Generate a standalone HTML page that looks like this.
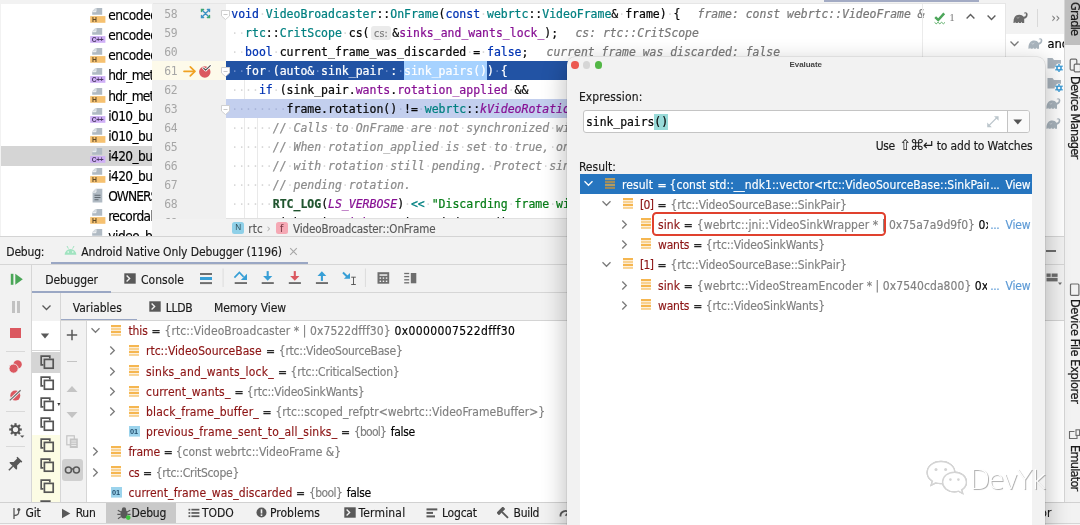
<!DOCTYPE html>
<html lang="en"><head><meta charset="utf-8"><title>Evaluate</title><style>
html,body{margin:0;padding:0;}
body{width:1080px;height:525px;overflow:hidden;position:relative;background:#f2f2f2;font-family:'DejaVu Sans Condensed','Liberation Sans',sans-serif;}
#root{position:absolute;left:0;top:0;width:1080px;height:525px;overflow:hidden;will-change:transform;}
#root div,#root span.t,#root svg,#root span.c{position:absolute;}
span.t,span.c{white-space:pre;display:block;}
.clip{overflow:hidden;}
span.m{-webkit-text-stroke:0.22px currentColor;}
span.u{-webkit-text-stroke:0.15px currentColor;}
</style></head><body><div id="root">
<div style="left:0px;top:0px;width:1080px;height:525px;background:#f2f2f2;"></div>
<div style="left:1px;top:3.5px;width:151px;height:232.3px;background:#ffffff;"></div>
<div style="left:1px;top:146px;width:151px;height:20px;background:#d5d5d5;"></div>
<div class="clip" style="left:0;top:3.5px;width:152px;height:232.3px">
<svg style="left:89.5px;top:4.5px" width="16" height="16" viewBox="0 0 16 16"><path d="M5.6 0 H12.2 V6.7 H2.2 V3.4 Z" fill="#b0bac3"/><path d="M5.9 0.2 V3.7 H2.4" fill="none" stroke="#ffffff" stroke-width="0.9"/><path d="M5.2 0.3 V3.1 H2.4 Z" fill="#d5dadf"/><rect x="0.2" y="8.1" width="15.2" height="6.7" fill="#f6c170"/><text x="1.9" y="14.1" font-size="6.8" font-weight="bold" font-family="Liberation Sans,sans-serif" fill="#5e4a2a">H</text></svg>
<span class="t u" style="left:108.2px;top:2.80px;height:18px;line-height:18px;font-size:13.6px;color:#000;font-family:'DejaVu Sans Condensed','Liberation Sans',sans-serif;letter-spacing:-0.45px;">encoded_frame.h</span>
<svg style="left:89.5px;top:24.549999999999997px" width="16" height="16" viewBox="0 0 16 16"><path d="M5.6 0 H12.2 V6.7 H2.2 V3.4 Z" fill="#b0bac3"/><path d="M5.9 0.2 V3.7 H2.4" fill="none" stroke="#ffffff" stroke-width="0.9"/><path d="M5.2 0.3 V3.1 H2.4 Z" fill="#d5dadf"/><rect x="0.2" y="8.1" width="15.2" height="6.7" fill="#cfaff6"/><text x="1.7" y="13.9" font-size="6.6" font-weight="bold" font-family="Liberation Sans,sans-serif" fill="#4a3a62" letter-spacing="-0.25">C++</text></svg>
<span class="t u" style="left:108.2px;top:22.85px;height:18px;line-height:18px;font-size:13.6px;color:#000;font-family:'DejaVu Sans Condensed','Liberation Sans',sans-serif;letter-spacing:-0.45px;">encoded_image.cc</span>
<svg style="left:89.5px;top:44.6px" width="16" height="16" viewBox="0 0 16 16"><path d="M5.6 0 H12.2 V6.7 H2.2 V3.4 Z" fill="#b0bac3"/><path d="M5.9 0.2 V3.7 H2.4" fill="none" stroke="#ffffff" stroke-width="0.9"/><path d="M5.2 0.3 V3.1 H2.4 Z" fill="#d5dadf"/><rect x="0.2" y="8.1" width="15.2" height="6.7" fill="#f6c170"/><text x="1.9" y="14.1" font-size="6.8" font-weight="bold" font-family="Liberation Sans,sans-serif" fill="#5e4a2a">H</text></svg>
<span class="t u" style="left:108.2px;top:42.90px;height:18px;line-height:18px;font-size:13.6px;color:#000;font-family:'DejaVu Sans Condensed','Liberation Sans',sans-serif;letter-spacing:-0.45px;">encoded_image.h</span>
<svg style="left:89.5px;top:64.65px" width="16" height="16" viewBox="0 0 16 16"><path d="M5.6 0 H12.2 V6.7 H2.2 V3.4 Z" fill="#b0bac3"/><path d="M5.9 0.2 V3.7 H2.4" fill="none" stroke="#ffffff" stroke-width="0.9"/><path d="M5.2 0.3 V3.1 H2.4 Z" fill="#d5dadf"/><rect x="0.2" y="8.1" width="15.2" height="6.7" fill="#cfaff6"/><text x="1.7" y="13.9" font-size="6.6" font-weight="bold" font-family="Liberation Sans,sans-serif" fill="#4a3a62" letter-spacing="-0.25">C++</text></svg>
<span class="t u" style="left:108.2px;top:62.95px;height:18px;line-height:18px;font-size:13.6px;color:#000;font-family:'DejaVu Sans Condensed','Liberation Sans',sans-serif;letter-spacing:-0.8px;">hdr_metadata.cc</span>
<svg style="left:89.5px;top:84.7px" width="16" height="16" viewBox="0 0 16 16"><path d="M5.6 0 H12.2 V6.7 H2.2 V3.4 Z" fill="#b0bac3"/><path d="M5.9 0.2 V3.7 H2.4" fill="none" stroke="#ffffff" stroke-width="0.9"/><path d="M5.2 0.3 V3.1 H2.4 Z" fill="#d5dadf"/><rect x="0.2" y="8.1" width="15.2" height="6.7" fill="#f6c170"/><text x="1.9" y="14.1" font-size="6.8" font-weight="bold" font-family="Liberation Sans,sans-serif" fill="#5e4a2a">H</text></svg>
<span class="t u" style="left:108.2px;top:83.00px;height:18px;line-height:18px;font-size:13.6px;color:#000;font-family:'DejaVu Sans Condensed','Liberation Sans',sans-serif;letter-spacing:-0.8px;">hdr_metadata.h</span>
<svg style="left:89.5px;top:104.75px" width="16" height="16" viewBox="0 0 16 16"><path d="M5.6 0 H12.2 V6.7 H2.2 V3.4 Z" fill="#b0bac3"/><path d="M5.9 0.2 V3.7 H2.4" fill="none" stroke="#ffffff" stroke-width="0.9"/><path d="M5.2 0.3 V3.1 H2.4 Z" fill="#d5dadf"/><rect x="0.2" y="8.1" width="15.2" height="6.7" fill="#cfaff6"/><text x="1.7" y="13.9" font-size="6.6" font-weight="bold" font-family="Liberation Sans,sans-serif" fill="#4a3a62" letter-spacing="-0.25">C++</text></svg>
<span class="t u" style="left:108.2px;top:103.05px;height:18px;line-height:18px;font-size:13.6px;color:#000;font-family:'DejaVu Sans Condensed','Liberation Sans',sans-serif;letter-spacing:-0.6px;">i010_buffer.cc</span>
<svg style="left:89.5px;top:124.80000000000001px" width="16" height="16" viewBox="0 0 16 16"><path d="M5.6 0 H12.2 V6.7 H2.2 V3.4 Z" fill="#b0bac3"/><path d="M5.9 0.2 V3.7 H2.4" fill="none" stroke="#ffffff" stroke-width="0.9"/><path d="M5.2 0.3 V3.1 H2.4 Z" fill="#d5dadf"/><rect x="0.2" y="8.1" width="15.2" height="6.7" fill="#f6c170"/><text x="1.9" y="14.1" font-size="6.8" font-weight="bold" font-family="Liberation Sans,sans-serif" fill="#5e4a2a">H</text></svg>
<span class="t u" style="left:108.2px;top:123.10px;height:18px;line-height:18px;font-size:13.6px;color:#000;font-family:'DejaVu Sans Condensed','Liberation Sans',sans-serif;letter-spacing:-0.6px;">i010_buffer.h</span>
<svg style="left:89.5px;top:144.85px" width="16" height="16" viewBox="0 0 16 16"><path d="M5.6 0 H12.2 V6.7 H2.2 V3.4 Z" fill="#b0bac3"/><path d="M5.9 0.2 V3.7 H2.4" fill="none" stroke="#ffffff" stroke-width="0.9"/><path d="M5.2 0.3 V3.1 H2.4 Z" fill="#d5dadf"/><rect x="0.2" y="8.1" width="15.2" height="6.7" fill="#cfaff6"/><text x="1.7" y="13.9" font-size="6.6" font-weight="bold" font-family="Liberation Sans,sans-serif" fill="#4a3a62" letter-spacing="-0.25">C++</text></svg>
<span class="t u" style="left:108.2px;top:143.15px;height:18px;line-height:18px;font-size:13.6px;color:#000;font-family:'DejaVu Sans Condensed','Liberation Sans',sans-serif;letter-spacing:-0.6px;">i420_buffer.cc</span>
<svg style="left:89.5px;top:164.9px" width="16" height="16" viewBox="0 0 16 16"><path d="M5.6 0 H12.2 V6.7 H2.2 V3.4 Z" fill="#b0bac3"/><path d="M5.9 0.2 V3.7 H2.4" fill="none" stroke="#ffffff" stroke-width="0.9"/><path d="M5.2 0.3 V3.1 H2.4 Z" fill="#d5dadf"/><rect x="0.2" y="8.1" width="15.2" height="6.7" fill="#f6c170"/><text x="1.9" y="14.1" font-size="6.8" font-weight="bold" font-family="Liberation Sans,sans-serif" fill="#5e4a2a">H</text></svg>
<span class="t u" style="left:108.2px;top:163.20px;height:18px;line-height:18px;font-size:13.6px;color:#000;font-family:'DejaVu Sans Condensed','Liberation Sans',sans-serif;letter-spacing:-0.6px;">i420_buffer.h</span>
<svg style="left:89.5px;top:184.95000000000002px" width="16" height="16" viewBox="0 0 16 16"><path d="M5.7 0.8 H12.3 V14.6 H2.6 V3.9 Z" fill="#b0bac3"/><path d="M5.9 1 V4.1 H2.8" fill="none" stroke="#ffffff" stroke-width="0.9"/><path d="M5.3 1.1 V3.6 H2.8 Z" fill="#d5dadf"/><path d="M4.5 7.3 H10.5 M4.5 9.5 H10.5 M4.5 11.7 H8.5" stroke="#5f6870" stroke-width="1.1"/></svg>
<span class="t u" style="left:108.2px;top:183.25px;height:18px;line-height:18px;font-size:13.6px;color:#000;font-family:'DejaVu Sans Condensed','Liberation Sans',sans-serif;letter-spacing:-0.95px;">OWNERS</span>
<svg style="left:89.5px;top:205.0px" width="16" height="16" viewBox="0 0 16 16"><path d="M5.6 0 H12.2 V6.7 H2.2 V3.4 Z" fill="#b0bac3"/><path d="M5.9 0.2 V3.7 H2.4" fill="none" stroke="#ffffff" stroke-width="0.9"/><path d="M5.2 0.3 V3.1 H2.4 Z" fill="#d5dadf"/><rect x="0.2" y="8.1" width="15.2" height="6.7" fill="#f6c170"/><text x="1.9" y="14.1" font-size="6.8" font-weight="bold" font-family="Liberation Sans,sans-serif" fill="#5e4a2a">H</text></svg>
<span class="t u" style="left:108.2px;top:203.30px;height:18px;line-height:18px;font-size:13.6px;color:#000;font-family:'DejaVu Sans Condensed','Liberation Sans',sans-serif;letter-spacing:-0.6px;">recordable_encoded_frame.h</span>
<svg style="left:89.5px;top:225.05px" width="16" height="16" viewBox="0 0 16 16"><path d="M5.6 0 H12.2 V6.7 H2.2 V3.4 Z" fill="#b0bac3"/><path d="M5.9 0.2 V3.7 H2.4" fill="none" stroke="#ffffff" stroke-width="0.9"/><path d="M5.2 0.3 V3.1 H2.4 Z" fill="#d5dadf"/><rect x="0.2" y="8.1" width="15.2" height="6.7" fill="#cfaff6"/><text x="1.7" y="13.9" font-size="6.6" font-weight="bold" font-family="Liberation Sans,sans-serif" fill="#4a3a62" letter-spacing="-0.25">C++</text></svg>
<span class="t u" style="left:108.2px;top:223.35px;height:18px;line-height:18px;font-size:13.6px;color:#000;font-family:'DejaVu Sans Condensed','Liberation Sans',sans-serif;letter-spacing:-0.45px;">video_bitrate_allocation.cc</span>
</div>
<div style="left:152px;top:3px;width:73.5px;height:216.5px;background:#f0f0f0;"></div>
<div style="left:152.5px;top:2.5px;width:852px;height:1px;background:#e6e6e6;"></div>
<div style="left:225.5px;top:3.5px;width:779px;height:216px;background:#ffffff;"></div>
<div style="left:243.5px;top:80.0px;width:0.8px;height:152.0px;background:#e9e9e9;"></div>
<div style="left:257.3px;top:99.0px;width:0.8px;height:133.0px;background:#e9e9e9;"></div>
<div style="left:152px;top:61.0px;width:73.5px;height:19.0px;background:#fdfaea;"></div>
<div style="left:225.5px;top:61.0px;width:779px;height:19.0px;background:#2253a4;"></div>
<div style="left:225.5px;top:99.0px;width:779px;height:19.0px;background:#c3cfee;"></div>
<div style="left:404.05px;top:61.0px;width:82.92px;height:19.0px;background:#a6d2ff;"></div>
<span class="t n" style="left:164.2px;top:4.90px;height:19.0px;line-height:19.0px;font-size:11.4px;color:#a6a6a6;font-family:'DejaVu Sans Mono','Liberation Mono',monospace;letter-spacing:-0.359px;">58</span>
<span class="t n" style="left:164.2px;top:23.90px;height:19.0px;line-height:19.0px;font-size:11.4px;color:#a6a6a6;font-family:'DejaVu Sans Mono','Liberation Mono',monospace;letter-spacing:-0.359px;">59</span>
<span class="t n" style="left:164.2px;top:42.90px;height:19.0px;line-height:19.0px;font-size:11.4px;color:#a6a6a6;font-family:'DejaVu Sans Mono','Liberation Mono',monospace;letter-spacing:-0.359px;">60</span>
<span class="t n" style="left:164.2px;top:61.90px;height:19.0px;line-height:19.0px;font-size:11.4px;color:#a6a6a6;font-family:'DejaVu Sans Mono','Liberation Mono',monospace;letter-spacing:-0.359px;">61</span>
<span class="t n" style="left:164.2px;top:80.90px;height:19.0px;line-height:19.0px;font-size:11.4px;color:#a6a6a6;font-family:'DejaVu Sans Mono','Liberation Mono',monospace;letter-spacing:-0.359px;">62</span>
<span class="t n" style="left:164.2px;top:99.90px;height:19.0px;line-height:19.0px;font-size:11.4px;color:#a6a6a6;font-family:'DejaVu Sans Mono','Liberation Mono',monospace;letter-spacing:-0.359px;">63</span>
<span class="t n" style="left:164.2px;top:118.90px;height:19.0px;line-height:19.0px;font-size:11.4px;color:#a6a6a6;font-family:'DejaVu Sans Mono','Liberation Mono',monospace;letter-spacing:-0.359px;">64</span>
<span class="t n" style="left:164.2px;top:137.90px;height:19.0px;line-height:19.0px;font-size:11.4px;color:#a6a6a6;font-family:'DejaVu Sans Mono','Liberation Mono',monospace;letter-spacing:-0.359px;">65</span>
<span class="t n" style="left:164.2px;top:156.90px;height:19.0px;line-height:19.0px;font-size:11.4px;color:#a6a6a6;font-family:'DejaVu Sans Mono','Liberation Mono',monospace;letter-spacing:-0.359px;">66</span>
<span class="t n" style="left:164.2px;top:175.90px;height:19.0px;line-height:19.0px;font-size:11.4px;color:#a6a6a6;font-family:'DejaVu Sans Mono','Liberation Mono',monospace;letter-spacing:-0.359px;">67</span>
<span class="t n" style="left:164.2px;top:194.90px;height:19.0px;line-height:19.0px;font-size:11.4px;color:#a6a6a6;font-family:'DejaVu Sans Mono','Liberation Mono',monospace;letter-spacing:-0.359px;">68</span>
<span class="t n" style="left:164.2px;top:213.90px;height:19.0px;line-height:19.0px;font-size:11.4px;color:#a6a6a6;font-family:'DejaVu Sans Mono','Liberation Mono',monospace;letter-spacing:-0.359px;">69</span>
<span class="t d" style="left:231.3px;top:4.90px;height:19.0px;line-height:19.0px;font-size:11.5px;color:#d9d9d9;font-family:'DejaVu Sans Mono','Liberation Mono',monospace;letter-spacing:-0.014px;">    ·                               ·                   ·      ·</span>
<span class="t m" style="left:231.3px;top:4.90px;height:19.0px;line-height:19.0px;font-size:11.5px;color:#0033b3;font-family:'DejaVu Sans Mono','Liberation Mono',monospace;letter-spacing:-0.016px;">void</span>
<span class="t m" style="left:265.85px;top:4.90px;height:19.0px;line-height:19.0px;font-size:11.5px;color:#008080;font-family:'DejaVu Sans Mono','Liberation Mono',monospace;letter-spacing:-0.014px;">VideoBroadcaster</span>
<span class="t m" style="left:376.41px;top:4.90px;height:19.0px;line-height:19.0px;font-size:11.5px;color:#080808;font-family:'DejaVu Sans Mono','Liberation Mono',monospace;letter-spacing:-0.020px;">::</span>
<span class="t m" style="left:390.23px;top:4.90px;height:19.0px;line-height:19.0px;font-size:11.5px;color:#008080;font-family:'DejaVu Sans Mono','Liberation Mono',monospace;letter-spacing:-0.014px;">OnFrame</span>
<span class="t m" style="left:438.6px;top:4.90px;height:19.0px;line-height:19.0px;font-size:11.5px;color:#080808;font-family:'DejaVu Sans Mono','Liberation Mono',monospace;letter-spacing:-0.027px;">(</span>
<span class="t m" style="left:445.51px;top:4.90px;height:19.0px;line-height:19.0px;font-size:11.5px;color:#0033b3;font-family:'DejaVu Sans Mono','Liberation Mono',monospace;letter-spacing:-0.015px;">const</span>
<span class="t m" style="left:486.97px;top:4.90px;height:19.0px;line-height:19.0px;font-size:11.5px;color:#008080;font-family:'DejaVu Sans Mono','Liberation Mono',monospace;letter-spacing:-0.014px;">webrtc</span>
<span class="t m" style="left:528.43px;top:4.90px;height:19.0px;line-height:19.0px;font-size:11.5px;color:#080808;font-family:'DejaVu Sans Mono','Liberation Mono',monospace;letter-spacing:-0.020px;">::</span>
<span class="t m" style="left:542.25px;top:4.90px;height:19.0px;line-height:19.0px;font-size:11.5px;color:#008080;font-family:'DejaVu Sans Mono','Liberation Mono',monospace;letter-spacing:-0.015px;">VideoFrame</span>
<span class="t m" style="left:611.35px;top:4.90px;height:19.0px;line-height:19.0px;font-size:11.5px;color:#080808;font-family:'DejaVu Sans Mono','Liberation Mono',monospace;letter-spacing:-0.015px;">&amp; frame) {</span>
<span class="t m" style="left:697.6px;top:4.90px;height:19.0px;line-height:19.0px;font-size:11.4px;color:#787878;font-family:'DejaVu Sans Mono','Liberation Mono',monospace;letter-spacing:0.021px;font-style:italic;">frame: const webrtc::VideoFrame &amp;</span>
<span class="t d" style="left:231.3px;top:23.90px;height:19.0px;line-height:19.0px;font-size:11.5px;color:#d9d9d9;font-family:'DejaVu Sans Mono','Liberation Mono',monospace;letter-spacing:-0.014px;">··              ·</span>
<span class="t m" style="left:245.12px;top:23.90px;height:19.0px;line-height:19.0px;font-size:11.5px;color:#008080;font-family:'DejaVu Sans Mono','Liberation Mono',monospace;letter-spacing:-0.017px;">rtc</span>
<span class="t m" style="left:265.85px;top:23.90px;height:19.0px;line-height:19.0px;font-size:11.5px;color:#080808;font-family:'DejaVu Sans Mono','Liberation Mono',monospace;letter-spacing:-0.020px;">::</span>
<span class="t m" style="left:279.67px;top:23.90px;height:19.0px;line-height:19.0px;font-size:11.5px;color:#008080;font-family:'DejaVu Sans Mono','Liberation Mono',monospace;letter-spacing:-0.014px;">CritScope</span>
<span class="t m" style="left:341.86px;top:23.90px;height:19.0px;line-height:19.0px;font-size:11.5px;color:#080808;font-family:'DejaVu Sans Mono','Liberation Mono',monospace;letter-spacing:-0.016px;"> cs(</span>
<div style="left:371.0px;top:25.5px;width:19.5px;height:14px;background:#ebebeb;border-radius:3px;"></div>
<span class="t u" style="left:374.0px;top:23.80px;height:19.0px;line-height:19.0px;font-size:10.5px;color:#7a7a7a;font-family:'DejaVu Sans Condensed','Liberation Sans',sans-serif;letter-spacing:0.229px;">cs:</span>
<span class="t m" style="left:392.3px;top:23.90px;height:19.0px;line-height:19.0px;font-size:11.4px;color:#080808;font-family:'DejaVu Sans Mono','Liberation Mono',monospace;letter-spacing:0.051px;">&amp;</span>
<span class="t m" style="left:399.21000000000004px;top:23.90px;height:19.0px;line-height:19.0px;font-size:11.4px;color:#871094;font-family:'DejaVu Sans Mono','Liberation Mono',monospace;letter-spacing:0.052px;">sinks_and_wants_lock_</span>
<span class="t m" style="left:544.32px;top:23.90px;height:19.0px;line-height:19.0px;font-size:11.4px;color:#080808;font-family:'DejaVu Sans Mono','Liberation Mono',monospace;letter-spacing:0.051px;">);</span>
<span class="t m" style="left:575.5px;top:23.90px;height:19.0px;line-height:19.0px;font-size:11.4px;color:#787878;font-family:'DejaVu Sans Mono','Liberation Mono',monospace;letter-spacing:-0.009px;font-style:italic;">cs: rtc::CritScope</span>
<span class="t d" style="left:231.3px;top:42.90px;height:19.0px;line-height:19.0px;font-size:11.5px;color:#d9d9d9;font-family:'DejaVu Sans Mono','Liberation Mono',monospace;letter-spacing:-0.014px;">··    ·                           · ·</span>
<span class="t m" style="left:245.12px;top:42.90px;height:19.0px;line-height:19.0px;font-size:11.5px;color:#0033b3;font-family:'DejaVu Sans Mono','Liberation Mono',monospace;letter-spacing:-0.016px;">bool</span>
<span class="t m" style="left:272.76px;top:42.90px;height:19.0px;line-height:19.0px;font-size:11.5px;color:#080808;font-family:'DejaVu Sans Mono','Liberation Mono',monospace;letter-spacing:-0.014px;"> current_frame_was_discarded = </span>
<span class="t m" style="left:486.97px;top:42.90px;height:19.0px;line-height:19.0px;font-size:11.5px;color:#0033b3;font-family:'DejaVu Sans Mono','Liberation Mono',monospace;letter-spacing:-0.015px;">false</span>
<span class="t m" style="left:521.52px;top:42.90px;height:19.0px;line-height:19.0px;font-size:11.5px;color:#080808;font-family:'DejaVu Sans Mono','Liberation Mono',monospace;letter-spacing:-0.027px;">;</span>
<span class="t m" style="left:546.6px;top:42.90px;height:19.0px;line-height:19.0px;font-size:11.4px;color:#787878;font-family:'DejaVu Sans Mono','Liberation Mono',monospace;letter-spacing:0.007px;font-style:italic;">current_frame_was_discarded: false</span>
<span class="t d" style="left:231.3px;top:61.90px;height:19.0px;line-height:19.0px;font-size:11.5px;color:#6788c8;font-family:'DejaVu Sans Mono','Liberation Mono',monospace;letter-spacing:-0.014px;">··   ·      ·         · ·             ·</span>
<span class="t m" style="left:231.3px;top:61.90px;height:19.0px;line-height:19.0px;font-size:11.5px;color:#ffffff;font-family:'DejaVu Sans Mono','Liberation Mono',monospace;letter-spacing:-0.014px;">  for (auto&amp; sink_pair : </span>
<span class="t m" style="left:404.05px;top:61.90px;height:19.0px;line-height:19.0px;font-size:11.5px;color:#ffffff;font-family:'DejaVu Sans Mono','Liberation Mono',monospace;letter-spacing:-0.014px;">sink_pairs()</span>
<span class="t m" style="left:486.97px;top:61.90px;height:19.0px;line-height:19.0px;font-size:11.5px;color:#ffffff;font-family:'DejaVu Sans Mono','Liberation Mono',monospace;letter-spacing:-0.017px;">) {</span>
<span class="t d" style="left:231.3px;top:80.90px;height:19.0px;line-height:19.0px;font-size:11.5px;color:#d9d9d9;font-family:'DejaVu Sans Mono','Liberation Mono',monospace;letter-spacing:-0.014px;">····  ·                                 ·</span>
<span class="t m" style="left:258.94px;top:80.90px;height:19.0px;line-height:19.0px;font-size:11.5px;color:#0033b3;font-family:'DejaVu Sans Mono','Liberation Mono',monospace;letter-spacing:-0.020px;">if</span>
<span class="t m" style="left:272.76px;top:80.90px;height:19.0px;line-height:19.0px;font-size:11.5px;color:#080808;font-family:'DejaVu Sans Mono','Liberation Mono',monospace;letter-spacing:-0.014px;"> (sink_pair.</span>
<span class="t m" style="left:355.68px;top:80.90px;height:19.0px;line-height:19.0px;font-size:11.5px;color:#871094;font-family:'DejaVu Sans Mono','Liberation Mono',monospace;letter-spacing:-0.015px;">wants</span>
<span class="t m" style="left:390.23px;top:80.90px;height:19.0px;line-height:19.0px;font-size:11.5px;color:#080808;font-family:'DejaVu Sans Mono','Liberation Mono',monospace;letter-spacing:-0.027px;">.</span>
<span class="t m" style="left:397.14px;top:80.90px;height:19.0px;line-height:19.0px;font-size:11.5px;color:#871094;font-family:'DejaVu Sans Mono','Liberation Mono',monospace;letter-spacing:-0.014px;">rotation_applied</span>
<span class="t m" style="left:507.7px;top:80.90px;height:19.0px;line-height:19.0px;font-size:11.5px;color:#080808;font-family:'DejaVu Sans Mono','Liberation Mono',monospace;letter-spacing:-0.017px;"> &amp;&amp;</span>
<span class="t d" style="left:231.3px;top:99.90px;height:19.0px;line-height:19.0px;font-size:11.5px;color:#aab6da;font-family:'DejaVu Sans Mono','Liberation Mono',monospace;letter-spacing:-0.014px;">········                ·  ·                         ·</span>
<span class="t m" style="left:231.3px;top:99.90px;height:19.0px;line-height:19.0px;font-size:11.5px;color:#080808;font-family:'DejaVu Sans Mono','Liberation Mono',monospace;letter-spacing:-0.014px;">        frame.rotation() != </span>
<span class="t m" style="left:424.78px;top:99.90px;height:19.0px;line-height:19.0px;font-size:11.5px;color:#008080;font-family:'DejaVu Sans Mono','Liberation Mono',monospace;letter-spacing:-0.014px;">webrtc</span>
<span class="t m" style="left:466.24px;top:99.90px;height:19.0px;line-height:19.0px;font-size:11.5px;color:#080808;font-family:'DejaVu Sans Mono','Liberation Mono',monospace;letter-spacing:-0.020px;">::</span>
<span class="t m" style="left:480.06px;top:99.90px;height:19.0px;line-height:19.0px;font-size:11.5px;color:#871094;font-family:'DejaVu Sans Mono','Liberation Mono',monospace;letter-spacing:-0.014px;font-style:italic;">kVideoRotation_0</span>
<span class="t m" style="left:590.62px;top:99.90px;height:19.0px;line-height:19.0px;font-size:11.5px;color:#080808;font-family:'DejaVu Sans Mono','Liberation Mono',monospace;letter-spacing:-0.017px;">) {</span>
<span class="t d" style="left:231.3px;top:118.90px;height:19.0px;line-height:19.0px;font-size:11.5px;color:#d9d9d9;font-family:'DejaVu Sans Mono','Liberation Mono',monospace;letter-spacing:-0.014px;">······  ·     ·  ·       ·   ·   ·            ·    ·       ·  ·   ·    ·</span>
<span class="t m" style="left:272.76px;top:118.90px;height:19.0px;line-height:19.0px;font-size:11.5px;color:#8c8c8c;font-family:'DejaVu Sans Mono','Liberation Mono',monospace;letter-spacing:-0.014px;font-style:italic;">// Calls to OnFrame are not synchronized with changes to the sink wants.</span>
<span class="t d" style="left:231.3px;top:137.90px;height:19.0px;line-height:19.0px;font-size:11.5px;color:#d9d9d9;font-family:'DejaVu Sans Mono','Liberation Mono',monospace;letter-spacing:-0.014px;">······  ·    ·                ·  ·   ·  ·     ·   ·  · ·   ·      ·   ·   ·</span>
<span class="t m" style="left:272.76px;top:137.90px;height:19.0px;line-height:19.0px;font-size:11.5px;color:#8c8c8c;font-family:'DejaVu Sans Mono','Liberation Mono',monospace;letter-spacing:-0.014px;font-style:italic;">// When rotation_applied is set to true, one or a few frames may get here</span>
<span class="t d" style="left:231.3px;top:156.90px;height:19.0px;line-height:19.0px;font-size:11.5px;color:#d9d9d9;font-family:'DejaVu Sans Mono','Liberation Mono',monospace;letter-spacing:-0.014px;">······  ·    ·        ·     ·        ·       ·     ·    ·     ·      ·</span>
<span class="t m" style="left:272.76px;top:156.90px;height:19.0px;line-height:19.0px;font-size:11.5px;color:#8c8c8c;font-family:'DejaVu Sans Mono','Liberation Mono',monospace;letter-spacing:-0.014px;font-style:italic;">// with rotation still pending. Protect sinks that don&#x27;t expect any</span>
<span class="t d" style="left:231.3px;top:175.90px;height:19.0px;line-height:19.0px;font-size:11.5px;color:#d9d9d9;font-family:'DejaVu Sans Mono','Liberation Mono',monospace;letter-spacing:-0.014px;">······  ·       ·</span>
<span class="t m" style="left:272.76px;top:175.90px;height:19.0px;line-height:19.0px;font-size:11.5px;color:#8c8c8c;font-family:'DejaVu Sans Mono','Liberation Mono',monospace;letter-spacing:-0.014px;font-style:italic;">// pending rotation.</span>
<span class="t d" style="left:231.3px;top:194.90px;height:19.0px;line-height:19.0px;font-size:11.5px;color:#d9d9d9;font-family:'DejaVu Sans Mono','Liberation Mono',monospace;letter-spacing:-0.014px;">······                   ·  ·           ·     ·    ·          ·</span>
<span class="t m" style="left:272.76px;top:194.90px;height:19.0px;line-height:19.0px;font-size:11.5px;color:#1f542e;font-family:'DejaVu Sans Mono','Liberation Mono',monospace;letter-spacing:-0.014px;font-weight:bold;">RTC_LOG</span>
<span class="t m" style="left:321.13px;top:194.90px;height:19.0px;line-height:19.0px;font-size:11.5px;color:#080808;font-family:'DejaVu Sans Mono','Liberation Mono',monospace;letter-spacing:-0.027px;">(</span>
<span class="t m" style="left:328.04px;top:194.90px;height:19.0px;line-height:19.0px;font-size:11.5px;color:#871094;font-family:'DejaVu Sans Mono','Liberation Mono',monospace;letter-spacing:-0.015px;font-style:italic;">LS_VERBOSE</span>
<span class="t m" style="left:397.14px;top:194.90px;height:19.0px;line-height:19.0px;font-size:11.5px;color:#080808;font-family:'DejaVu Sans Mono','Liberation Mono',monospace;letter-spacing:-0.020px;">) </span>
<span class="t m" style="left:410.96px;top:194.90px;height:19.0px;line-height:19.0px;font-size:11.5px;color:#008080;font-family:'DejaVu Sans Mono','Liberation Mono',monospace;letter-spacing:-0.020px;">&lt;&lt;</span>
<span class="t m" style="left:431.69px;top:194.90px;height:19.0px;line-height:19.0px;font-size:11.5px;color:#067d17;font-family:'DejaVu Sans Mono','Liberation Mono',monospace;letter-spacing:-0.014px;">&quot;Discarding frame with unexpected rotation.&quot;</span>
<span class="t m" style="left:735.73px;top:194.90px;height:19.0px;line-height:19.0px;font-size:11.5px;color:#080808;font-family:'DejaVu Sans Mono','Liberation Mono',monospace;letter-spacing:-0.027px;">;</span>
<span class="t d" style="left:231.3px;top:213.90px;height:19.0px;line-height:19.0px;font-size:11.5px;color:#d9d9d9;font-family:'DejaVu Sans Mono','Liberation Mono',monospace;letter-spacing:-0.014px;">······</span>
<span class="t m" style="left:231.3px;top:213.90px;height:19.0px;line-height:19.0px;font-size:11.5px;color:#080808;font-family:'DejaVu Sans Mono','Liberation Mono',monospace;letter-spacing:-0.014px;">      sink_pair.</span>
<span class="t m" style="left:341.86px;top:213.90px;height:19.0px;line-height:19.0px;font-size:11.5px;color:#871094;font-family:'DejaVu Sans Mono','Liberation Mono',monospace;letter-spacing:-0.016px;">sink</span>
<span class="t m" style="left:369.5px;top:213.90px;height:19.0px;line-height:19.0px;font-size:11.5px;color:#080808;font-family:'DejaVu Sans Mono','Liberation Mono',monospace;letter-spacing:-0.020px;">-&gt;</span>
<span class="t m" style="left:383.32px;top:213.90px;height:19.0px;line-height:19.0px;font-size:11.5px;color:#080808;font-family:'DejaVu Sans Mono','Liberation Mono',monospace;letter-spacing:-0.014px;">OnDiscardedFrame</span>
<span class="t m" style="left:493.88px;top:213.90px;height:19.0px;line-height:19.0px;font-size:11.5px;color:#080808;font-family:'DejaVu Sans Mono','Liberation Mono',monospace;letter-spacing:-0.017px;">();</span>
<svg style="left:199.5px;top:8.2px;" width="11" height="11" viewBox="0 0 11 11"><g fill="none" stroke-width="1.4" stroke-linecap="round"><path d="M2 2 L9 9 M9 2 L2 9" stroke="#3b92c4"/><path d="M1.5 3.6 V1.5 H3.6 M9.5 7.4 V9.5 H7.4" stroke="#3fa672"/><path d="M7.4 1.5 H9.5 V3.6 M3.6 9.5 H1.5 V7.4" stroke="#3b92c4"/></g></svg>
<svg style="left:183px;top:65px;" width="14" height="13" viewBox="0 0 14 13"><g fill="none" stroke="#f0a122" stroke-width="1.7" stroke-linecap="round" stroke-linejoin="round"><path d="M1 6.3 H11.6"/><path d="M7.3 1.8 L11.9 6.3 L7.3 10.8"/></g></svg>
<svg style="left:198px;top:63.5px;" width="15" height="15" viewBox="0 0 15 15"><circle cx="6.8" cy="8" r="5.7" fill="#db5860"/><path d="M5.6 4.2 L7.6 6.2 L12.3 1.6" fill="none" stroke="#ffffff" stroke-width="2.6" stroke-linecap="round" stroke-linejoin="round"/><path d="M5.6 4.2 L7.6 6.2 L12.3 1.6" fill="none" stroke="#4d4d4d" stroke-width="1.1" stroke-linecap="round" stroke-linejoin="round"/></svg>
<svg style="left:221px;top:9.8px;" width="9" height="10" viewBox="0 0 9 10"><path d="M0.5 0.5 H8.5 V6 L4.5 9.5 L0.5 6 Z" fill="#ffffff" stroke="#d0d0d0" stroke-width="1"/><path d="M2.5 4.5 H6.5" stroke="#c8c8c8" stroke-width="1"/></svg>
<svg style="left:221px;top:66.8px;" width="9" height="10" viewBox="0 0 9 10"><path d="M0.5 0.5 H8.5 V6 L4.5 9.5 L0.5 6 Z" fill="#ffffff" stroke="#d0d0d0" stroke-width="1"/><path d="M2.5 4.5 H6.5" stroke="#c8c8c8" stroke-width="1"/></svg>
<svg style="left:221px;top:104.8px;" width="9" height="10" viewBox="0 0 9 10"><path d="M0.5 0.5 H8.5 V6 L4.5 9.5 L0.5 6 Z" fill="#ffffff" stroke="#d0d0d0" stroke-width="1"/><path d="M2.5 4.5 H6.5" stroke="#c8c8c8" stroke-width="1"/></svg>
<div style="left:152px;top:218.6px;width:852.5px;height:17.6px;background:#f2f2f2;"></div>
<div style="left:225.5px;top:218.2px;width:779px;height:1px;background:#e0e0e0;"></div>
<div style="left:232.3px;top:221.5px;width:11.5px;height:12px;background:#8fd0e8;border-radius:2.5px;"></div>
<span class="t" style="left:235.2px;top:222.20px;height:12px;line-height:12px;font-size:8.2px;color:#31505c;font-family:'Liberation Sans',sans-serif;">N</span>
<span class="t u" style="left:248.3px;top:221.50px;height:14px;line-height:14px;font-size:11.5px;color:#595959;font-family:'DejaVu Sans Condensed','Liberation Sans',sans-serif;letter-spacing:0.167px;">rtc</span>
<span class="t u" style="left:266.8px;top:221.50px;height:14px;line-height:14px;font-size:11px;color:#b4b4b4;font-family:'DejaVu Sans Condensed','Liberation Sans',sans-serif;">›</span>
<div style="left:276.3px;top:221.5px;width:11.5px;height:12px;background:#f5a8b4;border-radius:2.5px;"></div>
<span class="t u" style="left:280px;top:222.10px;height:12px;line-height:12px;font-size:10.5px;color:#7a3a45;font-family:'DejaVu Sans Condensed','Liberation Sans',sans-serif;">f</span>
<span class="t u" style="left:293px;top:221.50px;height:14px;line-height:14px;font-size:11.5px;color:#595959;font-family:'DejaVu Sans Condensed','Liberation Sans',sans-serif;letter-spacing:-0.101px;">VideoBroadcaster::OnFrame</span>
<div style="left:824px;top:0px;width:154.5px;height:2.1px;background:#a3abc4;"></div>
<div style="left:922px;top:3.5px;width:1px;height:54px;background:#ebebeb;"></div>
<svg style="left:932.9px;top:11px;" width="14" height="14" viewBox="0 0 14 14"><path d="M2.2 6.2 L5.2 9 L11.2 2.4" fill="none" stroke="#4da65a" stroke-width="2.5" stroke-linecap="butt" stroke-linejoin="miter"/><path d="M1.5 11.3 L3.2 12.8 L5 11.3 L6.8 12.8 L8.6 11.3 L10.4 12.8 L12 11.4" fill="none" stroke="#4da65a" stroke-width="0.9"/></svg>
<span class="t" style="left:949.3px;top:10.20px;height:14px;line-height:14px;font-size:11px;color:#7a7a7a;font-family:'Liberation Serif',serif;">1</span>
<svg style="left:964.8px;top:12.3px;" width="11" height="9" viewBox="0 0 11 9"><path d="M1.6 6.5 L5.5 2.6 L9.4 6.5" fill="none" stroke="#5e5e5e" stroke-width="1.4"/></svg>
<svg style="left:986.4px;top:12.6px;" width="11" height="9" viewBox="0 0 11 9"><path d="M1.6 2.5 L5.5 6.4 L9.4 2.5" fill="none" stroke="#5e5e5e" stroke-width="1.4"/></svg>
<div style="left:1004.5px;top:3px;width:1px;height:233px;background:#e6e6e6;"></div>
<div style="left:1005.5px;top:3.5px;width:58.5px;height:30px;background:#f2f2f2;"></div>
<div style="left:1005.5px;top:33.5px;width:58.5px;height:203px;background:#ffffff;"></div>
<svg style="left:1012.8px;top:11.8px" width="15.6" height="11.4" viewBox="0 0 16 12"><path d="M0.3 11.6 C0 6 2.5 2.8 6.5 2.8 C8.5 2.8 10 3.6 11 5 C12.4 5 13.4 4 13.4 2.6 C13.4 1.6 12.6 1.2 12 1.6 C11.6 1.9 11.1 1.5 11.5 0.9 C12.6 -0.3 15.2 0.4 15.2 2.8 C15.2 5.6 13 7 11.6 7.2 V11.6 H9.4 L8.8 10.3 L8.2 11.6 H6 L5.4 10.3 L4.8 11.6 H2.6 L2 10.3 L1.4 11.6 Z" fill="#6a6a6a"/><path d="M3.6 5.6 L5 6.6 L6.6 5.4" fill="none" stroke="#ffffff" stroke-opacity="0.55" stroke-width="0.7"/></svg>
<div style="left:1037px;top:8.5px;width:1px;height:18px;background:#d9d9d9;"></div>
<span class="t u" style="left:1051.5px;top:10.70px;height:14px;line-height:14px;font-size:12px;color:#7d7d7d;font-family:'DejaVu Sans Condensed','Liberation Sans',sans-serif;letter-spacing:-0.070px;">››</span>
<svg style="left:1009.3px;top:38.6px;" width="11" height="9" viewBox="0 0 11 9"><path d="M1.5 2.5 L5.5 6.5 L9.5 2.5" fill="none" stroke="#7a7a7a" stroke-width="1.3"/></svg>
<svg style="left:1027.8px;top:37.6px" width="15.3" height="11.2" viewBox="0 0 16 12"><path d="M0.3 11.6 C0 6 2.5 2.8 6.5 2.8 C8.5 2.8 10 3.6 11 5 C12.4 5 13.4 4 13.4 2.6 C13.4 1.6 12.6 1.2 12 1.6 C11.6 1.9 11.1 1.5 11.5 0.9 C12.6 -0.3 15.2 0.4 15.2 2.8 C15.2 5.6 13 7 11.6 7.2 V11.6 H9.4 L8.8 10.3 L8.2 11.6 H6 L5.4 10.3 L4.8 11.6 H2.6 L2 10.3 L1.4 11.6 Z" fill="#a9b4bd"/><path d="M3.6 5.6 L5 6.6 L6.6 5.4" fill="none" stroke="#ffffff" stroke-opacity="0.55" stroke-width="0.7"/></svg>
<div class="clip" style="left:1046px;top:30px;width:18px;height:24px">
<span class="t u" style="left:1.4px;top:5.10px;height:18px;line-height:18px;font-size:12.8px;color:#000;font-family:'DejaVu Sans Condensed','Liberation Sans',sans-serif;">android</span>
</div>
<div class="clip" style="left:1044px;top:55px;width:20px;height:181px">
<svg style="left:2.5px;top:1.6000000000000014px" width="17" height="16" viewBox="0 0 17 16"><path d="M0.5 1 H5.5 L7 3 H14 V11.5 H0.5 Z" fill="#aab4bd"/><circle cx="12" cy="11" r="4.4" fill="#ffffff"/><circle cx="12" cy="11" r="2.1" fill="none" stroke="#3a9bd6" stroke-width="1.5"/><g stroke="#3a9bd6" stroke-width="1.4"><path d="M12 6.9 V8.4 M12 13.6 V15.1 M8.4 8.9 L9.8 9.7 M14.2 12.3 L15.6 13.1 M8.4 13.1 L9.8 12.3 M14.2 9.7 L15.6 8.9"/></g></svg>
<svg style="left:2.5px;top:21.599999999999994px" width="17" height="16" viewBox="0 0 17 16"><path d="M0.5 1 H5.5 L7 3 H14 V11.5 H0.5 Z" fill="#aab4bd"/><circle cx="12" cy="11" r="4.4" fill="#ffffff"/><circle cx="12" cy="11" r="2.1" fill="none" stroke="#3a9bd6" stroke-width="1.5"/><g stroke="#3a9bd6" stroke-width="1.4"><path d="M12 6.9 V8.4 M12 13.6 V15.1 M8.4 8.9 L9.8 9.7 M14.2 12.3 L15.6 13.1 M8.4 13.1 L9.8 12.3 M14.2 9.7 L15.6 8.9"/></g></svg>
<svg style="left:2.3px;top:42.8px" width="15.3" height="11.2" viewBox="0 0 16 12"><path d="M0.3 11.6 C0 6 2.5 2.8 6.5 2.8 C8.5 2.8 10 3.6 11 5 C12.4 5 13.4 4 13.4 2.6 C13.4 1.6 12.6 1.2 12 1.6 C11.6 1.9 11.1 1.5 11.5 0.9 C12.6 -0.3 15.2 0.4 15.2 2.8 C15.2 5.6 13 7 11.6 7.2 V11.6 H9.4 L8.8 10.3 L8.2 11.6 H6 L5.4 10.3 L4.8 11.6 H2.6 L2 10.3 L1.4 11.6 Z" fill="#a9b4bd"/><path d="M3.6 5.6 L5 6.6 L6.6 5.4" fill="none" stroke="#ffffff" stroke-opacity="0.55" stroke-width="0.7"/></svg>
<svg style="left:2.3px;top:62.8px" width="15.3" height="11.2" viewBox="0 0 16 12"><path d="M0.3 11.6 C0 6 2.5 2.8 6.5 2.8 C8.5 2.8 10 3.6 11 5 C12.4 5 13.4 4 13.4 2.6 C13.4 1.6 12.6 1.2 12 1.6 C11.6 1.9 11.1 1.5 11.5 0.9 C12.6 -0.3 15.2 0.4 15.2 2.8 C15.2 5.6 13 7 11.6 7.2 V11.6 H9.4 L8.8 10.3 L8.2 11.6 H6 L5.4 10.3 L4.8 11.6 H2.6 L2 10.3 L1.4 11.6 Z" fill="#a9b4bd"/><path d="M3.6 5.6 L5 6.6 L6.6 5.4" fill="none" stroke="#ffffff" stroke-opacity="0.55" stroke-width="0.7"/></svg>
</div>
<div style="left:1064px;top:0px;width:16px;height:503px;background:#f2f2f2;"></div>
<div style="left:1064px;top:0px;width:16px;height:44.5px;background:#bfbfbf;"></div>
<div style="left:1063.5px;top:0px;width:0.8px;height:503px;background:#d6d6d6;"></div>
<div style="left:1075.3px;top:2px;width:0;height:0;transform:rotate(90deg);transform-origin:0 0;"><span class="t" style="left:0;top:-8px;height:16px;line-height:16px;font-size:12.6px;color:#1a1a1a;-webkit-text-stroke:0.25px currentColor;letter-spacing:-0.734px;">Gradle</span></div>
<svg style="left:1067.5px;top:58.3px;" width="13" height="15" viewBox="0 0 13 15"><g fill="none" stroke="#6b6b6b" stroke-width="1.2"><rect x="2.2" y="1.2" width="6.6" height="11" rx="1.2"/><rect x="6.2" y="6.2" width="6.3" height="7.6" rx="1" fill="#f2f2f2"/></g></svg>
<div style="left:1075.3px;top:76px;width:0;height:0;transform:rotate(90deg);transform-origin:0 0;"><span class="t" style="left:0;top:-8px;height:16px;line-height:16px;font-size:12.6px;color:#1a1a1a;-webkit-text-stroke:0.25px currentColor;letter-spacing:-0.681px;">Device Manager</span></div>
<svg style="left:1068.7px;top:283px;" width="11" height="13" viewBox="0 0 11 13"><rect x="1.5" y="1" width="8.4" height="11.4" rx="1" fill="none" stroke="#6b6b6b" stroke-width="1.2"/></svg>
<div style="left:1075.3px;top:299px;width:0;height:0;transform:rotate(90deg);transform-origin:0 0;"><span class="t" style="left:0;top:-8px;height:16px;line-height:16px;font-size:12.6px;color:#1a1a1a;-webkit-text-stroke:0.25px currentColor;letter-spacing:-0.373px;">Device File Explorer</span></div>
<svg style="left:1067.8px;top:428.6px;" width="13" height="11" viewBox="0 0 13 11"><g fill="none" stroke="#6b6b6b" stroke-width="1.1"><path d="M6.5 2.5 H1.5 V9.5 H9 V7"/><rect x="8" y="0.8" width="3.6" height="5.6" fill="#f2f2f2"/></g></svg>
<div style="left:1075.3px;top:444.7px;width:0;height:0;transform:rotate(90deg);transform-origin:0 0;"><span class="t" style="left:0;top:-8px;height:16px;line-height:16px;font-size:12.6px;color:#1a1a1a;-webkit-text-stroke:0.25px currentColor;letter-spacing:-0.750px;">Emulator</span></div>
<div style="left:0px;top:235.8px;width:1064px;height:1px;background:#d4d4d4;"></div>
<div style="left:0px;top:236.8px;width:1064px;height:27.5px;background:#f2f2f2;"></div>
<span class="t u" style="left:6.3px;top:244.00px;height:16px;line-height:16px;font-size:12px;color:#1a1a1a;font-family:'DejaVu Sans Condensed','Liberation Sans',sans-serif;letter-spacing:-0.193px;">Debug:</span>
<svg style="left:64.3px;top:244.9px" width="13" height="11" viewBox="0 0 13 11"><path d="M0.6 9.8 A5.9 5.9 0 0 1 12.4 9.8 Z" fill="#a0e3c0"/><path d="M3 1 L4.4 3.6 M10 1 L8.6 3.6" stroke="#a0e3c0" stroke-width="1"/><circle cx="4.2" cy="6.9" r="0.75" fill="#fff"/><circle cx="8.8" cy="6.9" r="0.75" fill="#fff"/></svg>
<span class="t u" style="left:81.3px;top:244.00px;height:16px;line-height:16px;font-size:12px;color:#1a1a1a;font-family:'DejaVu Sans Condensed','Liberation Sans',sans-serif;letter-spacing:-0.113px;">Android Native Only Debugger (1196)</span>
<svg style="left:288.5px;top:247px;" width="9" height="9" viewBox="0 0 9 9"><path d="M1.2 1.2 L7.8 7.8 M7.8 1.2 L1.2 7.8" stroke="#a6a6a6" stroke-width="1.1"/></svg>
<div style="left:51px;top:262px;width:256.5px;height:2.4px;background:#9aa7c4;"></div>
<div style="left:0px;top:264px;width:1064px;height:1px;background:#d6d6d6;"></div>
<div style="left:0px;top:265px;width:31px;height:237px;background:#f2f2f2;"></div>
<div style="left:31px;top:265px;width:1px;height:237px;background:#d6d6d6;"></div>
<div style="left:32px;top:265px;width:1032px;height:27.5px;background:#f2f2f2;"></div>
<div style="left:32px;top:292.3px;width:1032px;height:1px;background:#d6d6d6;"></div>
<span class="t u" style="left:45.3px;top:271.50px;height:16px;line-height:16px;font-size:12px;color:#1a1a1a;font-family:'DejaVu Sans Condensed','Liberation Sans',sans-serif;letter-spacing:-0.119px;">Debugger</span>
<div style="left:32px;top:290.6px;width:79px;height:2px;background:#9aa7c4;"></div>
<svg style="left:123.8px;top:273.3px" width="12" height="11" viewBox="0 0 12 11"><rect x="0.3" y="0.3" width="11.4" height="10.4" fill="#595959"/><path d="M2.6 2.6 L5.6 5.5 L2.6 8.4" fill="none" stroke="#f2f2f2" stroke-width="1.4"/></svg>
<span class="t u" style="left:141px;top:271.50px;height:16px;line-height:16px;font-size:12px;color:#1a1a1a;font-family:'DejaVu Sans Condensed','Liberation Sans',sans-serif;letter-spacing:0.018px;">Console</span>
<svg style="left:190px;top:265px;" width="240" height="28" viewBox="190 265 240 28"><rect x="200" y="273" width="12" height="2" fill="#6e6e6e"/><rect x="200" y="277" width="12" height="3" fill="#389fd6"/><rect x="200" y="282.1" width="12" height="2" fill="#6e6e6e"/><rect x="222.6" y="268.5" width="1" height="18.5" fill="#dcdcdc"/><path d="M234.4 277.6 L239.4 272.5 L243.6 276.8" fill="none" stroke="#389fd6" stroke-width="1.7"/><path d="M247 273.8 V280 H240.8 Z" fill="#389fd6"/><rect x="234.7" y="282.1" width="12.3" height="1.9" fill="#6e6e6e"/><rect x="266.65" y="271.1" width="2.1" height="5.4" fill="#389fd6"/><path d="M263.09999999999997 276 H272.3 L267.7 280.8 Z" fill="#389fd6"/><rect x="261.7" y="282.1" width="12.1" height="1.9" fill="#6e6e6e"/><rect x="293.75" y="271.1" width="2.1" height="5.4" fill="#db5860"/><path d="M290.2 276 H299.40000000000003 L294.8 280.8 Z" fill="#db5860"/><rect x="288.8" y="282.1" width="12.1" height="1.9" fill="#6e6e6e"/><rect x="320.84999999999997" y="275.6" width="2.1" height="5.3" fill="#389fd6"/><path d="M317.5 276 H326.29999999999995 L321.9 271.3 Z" fill="#389fd6"/><rect x="315.9" y="282.1" width="12.1" height="1.9" fill="#6e6e6e"/><path d="M343 272.5 L347.8 277.2" stroke="#389fd6" stroke-width="2"/><path d="M350 272.9 V278.7 H343.9 Z" fill="#389fd6"/><path d="M351.2 277.2 H355.8 M353.5 277.2 V284.5 M351.2 284.5 H355.8" fill="none" stroke="#4d4d4d" stroke-width="0.9"/><rect x="364.9" y="268.5" width="1" height="18.5" fill="#dcdcdc"/><rect x="377.5" y="272.2" width="11.7" height="11.5" fill="#6e6e6e"/><rect x="379.5" y="274.3" width="7.8" height="1.5" fill="#f2f2f2"/><rect x="379.6" y="277.4" width="1.5" height="1.4" fill="#f2f2f2"/><rect x="382.7" y="277.4" width="1.5" height="1.4" fill="#f2f2f2"/><rect x="385.8" y="277.4" width="1.5" height="1.4" fill="#f2f2f2"/><rect x="379.6" y="280.6" width="1.5" height="1.4" fill="#f2f2f2"/><rect x="382.7" y="280.6" width="1.5" height="1.4" fill="#f2f2f2"/><rect x="385.8" y="280.6" width="1.5" height="1.4" fill="#f2f2f2"/><rect x="404.2" y="272.85" width="5" height="1.3" fill="#6e6e6e"/><rect x="404.2" y="275.95000000000005" width="5" height="1.3" fill="#6e6e6e"/><rect x="404.2" y="279.15000000000003" width="5" height="1.3" fill="#6e6e6e"/><rect x="404.2" y="282.15000000000003" width="5" height="1.3" fill="#6e6e6e"/><rect x="410.8" y="273" width="5.5" height="10.3" fill="#6e6e6e"/></svg>
<svg style="left:9.5px;top:273px;" width="15" height="13" viewBox="0 0 15 13"><rect x="0.8" y="0.8" width="2.6" height="11" fill="#4aa657"/><path d="M5.3 0.8 L12.8 6.3 L5.3 11.8 Z" fill="#4aa657"/></svg>
<div style="left:12px;top:301px;width:2.6px;height:11.5px;background:#c2c2c2;"></div>
<div style="left:17px;top:301px;width:2.6px;height:11.5px;background:#c2c2c2;"></div>
<div style="left:10.3px;top:328.3px;width:10.3px;height:10.1px;background:#db5860;"></div>
<div style="left:6px;top:351.3px;width:19px;height:1px;background:#d9d9d9;"></div>
<svg style="left:8.2px;top:359.4px;" width="16" height="16" viewBox="0 0 16 16"><circle cx="9.6" cy="5.4" r="4.2" fill="#db5860"/><circle cx="5.6" cy="9.6" r="4.6" fill="#db5860" stroke="#f2f2f2" stroke-width="0.9"/></svg>
<svg style="left:7.8px;top:387.5px;" width="15" height="15" viewBox="0 0 15 15"><circle cx="7.3" cy="7.6" r="5" fill="#db5860"/><path d="M1.6 12.6 L12.8 2" stroke="#f2f2f2" stroke-width="3"/><path d="M1.8 12.4 L12.6 2.2" stroke="#6e6e6e" stroke-width="1.2"/></svg>
<div style="left:6px;top:411px;width:19px;height:1px;background:#d9d9d9;"></div>
<svg style="left:8.5px;top:422.6px;" width="16" height="16" viewBox="0 0 16 16"><rect x="5.4" y="0.2" width="2.2" height="3" fill="#555555" transform="rotate(0 6.5 6.5)"/><rect x="5.4" y="0.2" width="2.2" height="3" fill="#555555" transform="rotate(45 6.5 6.5)"/><rect x="5.4" y="0.2" width="2.2" height="3" fill="#555555" transform="rotate(90 6.5 6.5)"/><rect x="5.4" y="0.2" width="2.2" height="3" fill="#555555" transform="rotate(135 6.5 6.5)"/><rect x="5.4" y="0.2" width="2.2" height="3" fill="#555555" transform="rotate(180 6.5 6.5)"/><rect x="5.4" y="0.2" width="2.2" height="3" fill="#555555" transform="rotate(225 6.5 6.5)"/><rect x="5.4" y="0.2" width="2.2" height="3" fill="#555555" transform="rotate(270 6.5 6.5)"/><rect x="5.4" y="0.2" width="2.2" height="3" fill="#555555" transform="rotate(315 6.5 6.5)"/><circle cx="6.5" cy="6.5" r="3.6" fill="none" stroke="#555555" stroke-width="2"/><path d="M11 12.4 H15.4 L13.2 14.8 Z" fill="#555555"/></svg>
<div style="left:6px;top:446px;width:19px;height:1px;background:#d9d9d9;"></div>
<svg style="left:6px;top:456px;" width="17" height="17" viewBox="0 0 17 17"><g transform="scale(1.22) rotate(45 7 7)"><path d="M4.2 0.8 H9.8 V2 H9 V6 L11 8 V9 H3 V8 L5 6 V2 H4.2 Z" fill="#595959"/><path d="M7 9 V13.6" stroke="#595959" stroke-width="1.2"/></g></svg>
<div style="left:32px;top:293.3px;width:1032px;height:27px;background:#f2f2f2;"></div>
<div style="left:59.5px;top:293.3px;width:1px;height:209px;background:#d6d6d6;"></div>
<svg style="left:40.5px;top:302.5px;" width="11" height="9" viewBox="0 0 11 9"><path d="M1.5 2.5 L5.5 6.5 L9.5 2.5" fill="none" stroke="#595959" stroke-width="1.3"/></svg>
<span class="t u" style="left:72.8px;top:299.50px;height:16px;line-height:16px;font-size:12px;color:#1a1a1a;font-family:'DejaVu Sans Condensed','Liberation Sans',sans-serif;letter-spacing:-0.028px;">Variables</span>
<div style="left:60.5px;top:318.7px;width:76px;height:2px;background:#9aa7c4;"></div>
<div style="left:60.5px;top:320.4px;width:1004px;height:1px;background:#d4d4d4;"></div>
<svg style="left:148.8px;top:301.3px" width="12" height="11" viewBox="0 0 12 11"><rect x="0.3" y="0.3" width="11.4" height="10.4" fill="#595959"/><path d="M2.6 2.6 L5.6 5.5 L2.6 8.4" fill="none" stroke="#f2f2f2" stroke-width="1.4"/></svg>
<span class="t u" style="left:165.8px;top:299.50px;height:16px;line-height:16px;font-size:12px;color:#1a1a1a;font-family:'DejaVu Sans Condensed','Liberation Sans',sans-serif;letter-spacing:-0.312px;">LLDB</span>
<span class="t u" style="left:214px;top:299.50px;height:16px;line-height:16px;font-size:12px;color:#1a1a1a;font-family:'DejaVu Sans Condensed','Liberation Sans',sans-serif;letter-spacing:-0.085px;">Memory View</span>
<div style="left:32px;top:321px;width:27.5px;height:181px;background:#ffffff;"></div>
<div style="left:32px;top:349.5px;width:27.5px;height:1px;background:#d6d6d6;"></div>
<svg style="left:39.8px;top:332.2px;" width="10" height="8" viewBox="0 0 10 8"><path d="M0.8 1.6 H9.2 L5 6.4 Z" fill="#595959"/></svg>
<div style="left:32px;top:352.3px;width:27.5px;height:20.5px;background:#d5d5d5;"></div>
<div style="left:32px;top:435px;width:27.5px;height:67px;background:#fcfce4;"></div>
<div class="clip" style="left:32px;top:321px;width:27.5px;height:181px">
<svg style="left:8.2px;top:34.30000000000001px" width="15" height="15" viewBox="0 0 15 15"><g fill="none" stroke="#555555" stroke-width="1.7"><path d="M9.8 3.4 V1.2 H1.2 V9.8 H3.4"/><rect x="4.4" y="4.4" width="8.8" height="8.8"/></g></svg>
<svg style="left:8.2px;top:54.900000000000034px" width="15" height="15" viewBox="0 0 15 15"><g fill="none" stroke="#555555" stroke-width="1.7"><path d="M9.8 3.4 V1.2 H1.2 V9.8 H3.4"/><rect x="4.4" y="4.4" width="8.8" height="8.8"/></g></svg>
<svg style="left:8.2px;top:75.5px" width="15" height="15" viewBox="0 0 15 15"><g fill="none" stroke="#555555" stroke-width="1.7"><path d="M9.8 3.4 V1.2 H1.2 V9.8 H3.4"/><rect x="4.4" y="4.4" width="8.8" height="8.8"/></g></svg>
<svg style="left:8.2px;top:96.10000000000002px" width="15" height="15" viewBox="0 0 15 15"><g fill="none" stroke="#555555" stroke-width="1.7"><path d="M9.8 3.4 V1.2 H1.2 V9.8 H3.4"/><rect x="4.4" y="4.4" width="8.8" height="8.8"/></g></svg>
<svg style="left:8.2px;top:116.70000000000005px" width="15" height="15" viewBox="0 0 15 15"><g fill="none" stroke="#555555" stroke-width="1.7"><path d="M9.8 3.4 V1.2 H1.2 V9.8 H3.4"/><rect x="4.4" y="4.4" width="8.8" height="8.8"/></g></svg>
<svg style="left:8.2px;top:137.3px" width="15" height="15" viewBox="0 0 15 15"><g fill="none" stroke="#555555" stroke-width="1.7"><path d="M9.8 3.4 V1.2 H1.2 V9.8 H3.4"/><rect x="4.4" y="4.4" width="8.8" height="8.8"/></g></svg>
<svg style="left:8.2px;top:157.90000000000003px" width="15" height="15" viewBox="0 0 15 15"><g fill="none" stroke="#555555" stroke-width="1.7"><path d="M9.8 3.4 V1.2 H1.2 V9.8 H3.4"/><rect x="4.4" y="4.4" width="8.8" height="8.8"/></g></svg>
<svg style="left:8.2px;top:178.5px" width="15" height="15" viewBox="0 0 15 15"><g fill="none" stroke="#555555" stroke-width="1.7"><path d="M9.8 3.4 V1.2 H1.2 V9.8 H3.4"/><rect x="4.4" y="4.4" width="8.8" height="8.8"/></g></svg>
</div>
<span class="t u" style="left:57.6px;top:400.00px;height:8px;line-height:8px;font-size:6px;color:#333;font-family:'DejaVu Sans Condensed','Liberation Sans',sans-serif;">▾</span>
<div style="left:60.5px;top:321.3px;width:25px;height:181px;background:#f2f2f2;"></div>
<div style="left:85.5px;top:321.3px;width:1px;height:181px;background:#d6d6d6;"></div>
<svg style="left:66px;top:328.7px;" width="12" height="12" viewBox="0 0 12 12"><path d="M6 0.8 V11.2 M0.8 6 H11.2" stroke="#595959" stroke-width="1.5"/></svg>
<div style="left:66.7px;top:360.5px;width:10.5px;height:1.5px;background:#c4c4c4;"></div>
<svg style="left:66.2px;top:385px;" width="12" height="8" viewBox="0 0 12 8"><path d="M0.5 7 L6 1 L11.5 7 Z" fill="#c4c4c4"/></svg>
<svg style="left:66.2px;top:411px;" width="12" height="8" viewBox="0 0 12 8"><path d="M0.5 1 L6 7 L11.5 1 Z" fill="#c4c4c4"/></svg>
<svg style="left:65.7px;top:434.7px;" width="13" height="14" viewBox="0 0 13 14"><rect x="0.8" y="0.8" width="7.5" height="9" fill="none" stroke="#c4c4c4" stroke-width="1.2"/><rect x="3.8" y="3.5" width="8" height="9.5" fill="#c4c4c4"/><path d="M5.3 6 H10.3 M5.3 8.2 H10.3 M5.3 10.4 H10.3" stroke="#f2f2f2" stroke-width="0.9"/></svg>
<div style="left:61.5px;top:458.5px;width:21.5px;height:22px;background:#d0d0d0;border-radius:3px;"></div>
<svg style="left:63.8px;top:465px;" width="17" height="9" viewBox="0 0 17 9"><g fill="none" stroke="#595959" stroke-width="1.5"><circle cx="4.4" cy="5" r="3"/><circle cx="12.4" cy="5" r="3"/><path d="M7.4 4 H9.4"/></g></svg>
<div style="left:86.5px;top:321.4px;width:977.5px;height:181px;background:#ffffff;"></div>
<svg style="left:90.2px;top:326.0px;" width="11" height="9" viewBox="0 0 11 9"><path d="M1.5 2.3 L5.5 6.3 L9.5 2.3" fill="none" stroke="#7a7a7a" stroke-width="1.3"/></svg>
<svg style="left:111.2px;top:324.8px" width="10" height="11" viewBox="0 0 10 11"><rect x="0" y="0" width="10" height="2.2" fill="#f5b650"/><rect x="0" y="2.9" width="10" height="2.2" fill="#f9d291"/><rect x="0" y="5.8" width="10" height="2.2" fill="#f5b650"/><rect x="0" y="8.7" width="10" height="2.2" fill="#f9d291"/></svg>
<span class="t u" style="left:128.4px;top:323.00px;height:16px;line-height:16px;font-size:12px;color:#8c1414;font-family:'DejaVu Sans Condensed','Liberation Sans',sans-serif;letter-spacing:-0.051px;">this</span>
<span class="t" style="left:151.5px;top:323.00px;height:16px;line-height:16px;font-size:12px;color:#262626;font-family:'DejaVu Sans Condensed','Liberation Sans',sans-serif;-webkit-text-stroke:0.35px currentColor;">=</span>
<span class="t u" style="left:164.5px;top:323.00px;height:16px;line-height:16px;font-size:12px;color:#7f7f7f;font-family:'DejaVu Sans Condensed','Liberation Sans',sans-serif;letter-spacing:0.079px;">{rtc::VideoBroadcaster * | 0x7522dfff30}</span>
<span class="t u" style="left:394.5px;top:323.00px;height:16px;line-height:16px;font-size:12px;color:#000000;font-family:'DejaVu Sans Condensed','Liberation Sans',sans-serif;letter-spacing:0.375px;">0x0000007522dfff30</span>
<svg style="left:108.30000000000001px;top:345.3px;" width="9" height="11" viewBox="0 0 9 11"><path d="M2.3 1.5 L6.3 5.5 L2.3 9.5" fill="none" stroke="#7a7a7a" stroke-width="1.3"/></svg>
<svg style="left:128.8px;top:345.1px" width="10" height="11" viewBox="0 0 10 11"><rect x="0" y="0" width="10" height="2.2" fill="#f5b650"/><rect x="0" y="2.9" width="10" height="2.2" fill="#f9d291"/><rect x="0" y="5.8" width="10" height="2.2" fill="#f5b650"/><rect x="0" y="8.7" width="10" height="2.2" fill="#f9d291"/></svg>
<span class="t u" style="left:146.0px;top:343.30px;height:16px;line-height:16px;font-size:12px;color:#8c1414;font-family:'DejaVu Sans Condensed','Liberation Sans',sans-serif;letter-spacing:0.007px;">rtc::VideoSourceBase</span>
<span class="t" style="left:265.9px;top:343.30px;height:16px;line-height:16px;font-size:12px;color:#262626;font-family:'DejaVu Sans Condensed','Liberation Sans',sans-serif;-webkit-text-stroke:0.35px currentColor;">=</span>
<span class="t u" style="left:278.8px;top:343.30px;height:16px;line-height:16px;font-size:12px;color:#7f7f7f;font-family:'DejaVu Sans Condensed','Liberation Sans',sans-serif;letter-spacing:-0.249px;">{rtc::VideoSourceBase}</span>
<svg style="left:108.30000000000001px;top:365.5px;" width="9" height="11" viewBox="0 0 9 11"><path d="M2.3 1.5 L6.3 5.5 L2.3 9.5" fill="none" stroke="#7a7a7a" stroke-width="1.3"/></svg>
<svg style="left:128.8px;top:365.3px" width="10" height="11" viewBox="0 0 10 11"><rect x="0" y="0" width="10" height="2.2" fill="#f5b650"/><rect x="0" y="2.9" width="10" height="2.2" fill="#f9d291"/><rect x="0" y="5.8" width="10" height="2.2" fill="#f5b650"/><rect x="0" y="8.7" width="10" height="2.2" fill="#f9d291"/></svg>
<span class="t u" style="left:146.0px;top:363.50px;height:16px;line-height:16px;font-size:12px;color:#8c1414;font-family:'DejaVu Sans Condensed','Liberation Sans',sans-serif;letter-spacing:0.220px;">sinks_and_wants_lock_</span>
<span class="t" style="left:278.09999999999997px;top:363.50px;height:16px;line-height:16px;font-size:12px;color:#262626;font-family:'DejaVu Sans Condensed','Liberation Sans',sans-serif;-webkit-text-stroke:0.35px currentColor;">=</span>
<span class="t u" style="left:290.6px;top:363.50px;height:16px;line-height:16px;font-size:12px;color:#7f7f7f;font-family:'DejaVu Sans Condensed','Liberation Sans',sans-serif;letter-spacing:-0.208px;">{rtc::CriticalSection}</span>
<svg style="left:108.30000000000001px;top:385.7px;" width="9" height="11" viewBox="0 0 9 11"><path d="M2.3 1.5 L6.3 5.5 L2.3 9.5" fill="none" stroke="#7a7a7a" stroke-width="1.3"/></svg>
<svg style="left:128.8px;top:385.5px" width="10" height="11" viewBox="0 0 10 11"><rect x="0" y="0" width="10" height="2.2" fill="#f5b650"/><rect x="0" y="2.9" width="10" height="2.2" fill="#f9d291"/><rect x="0" y="5.8" width="10" height="2.2" fill="#f5b650"/><rect x="0" y="8.7" width="10" height="2.2" fill="#f9d291"/></svg>
<span class="t u" style="left:146.0px;top:383.70px;height:16px;line-height:16px;font-size:12px;color:#8c1414;font-family:'DejaVu Sans Condensed','Liberation Sans',sans-serif;letter-spacing:0.190px;">current_wants_</span>
<span class="t" style="left:234.39999999999998px;top:383.70px;height:16px;line-height:16px;font-size:12px;color:#262626;font-family:'DejaVu Sans Condensed','Liberation Sans',sans-serif;-webkit-text-stroke:0.35px currentColor;">=</span>
<span class="t u" style="left:246.8px;top:383.70px;height:16px;line-height:16px;font-size:12px;color:#7f7f7f;font-family:'DejaVu Sans Condensed','Liberation Sans',sans-serif;letter-spacing:-0.206px;">{rtc::VideoSinkWants}</span>
<svg style="left:108.30000000000001px;top:405.8px;" width="9" height="11" viewBox="0 0 9 11"><path d="M2.3 1.5 L6.3 5.5 L2.3 9.5" fill="none" stroke="#7a7a7a" stroke-width="1.3"/></svg>
<svg style="left:128.8px;top:405.6px" width="10" height="11" viewBox="0 0 10 11"><rect x="0" y="0" width="10" height="2.2" fill="#f5b650"/><rect x="0" y="2.9" width="10" height="2.2" fill="#f9d291"/><rect x="0" y="5.8" width="10" height="2.2" fill="#f5b650"/><rect x="0" y="8.7" width="10" height="2.2" fill="#f9d291"/></svg>
<span class="t u" style="left:146.0px;top:403.80px;height:16px;line-height:16px;font-size:12px;color:#8c1414;font-family:'DejaVu Sans Condensed','Liberation Sans',sans-serif;letter-spacing:0.191px;">black_frame_buffer_</span>
<span class="t" style="left:262.59999999999997px;top:403.80px;height:16px;line-height:16px;font-size:12px;color:#262626;font-family:'DejaVu Sans Condensed','Liberation Sans',sans-serif;-webkit-text-stroke:0.35px currentColor;">=</span>
<span class="t u" style="left:275.4px;top:403.80px;height:16px;line-height:16px;font-size:12px;color:#7f7f7f;font-family:'DejaVu Sans Condensed','Liberation Sans',sans-serif;letter-spacing:0.024px;">{rtc::scoped_refptr&lt;webrtc::VideoFrameBuffer&gt;}</span>
<svg style="left:128.8px;top:426.0px" width="11" height="11" viewBox="0 0 11 11"><rect width="11" height="10.6" fill="#9bd3ec"/><text x="1.1" y="8.1" font-size="7.4" font-weight="bold" font-family="Liberation Sans,sans-serif" fill="#245070" letter-spacing="-0.3">01</text></svg>
<span class="t u" style="left:146.0px;top:423.80px;height:16px;line-height:16px;font-size:12px;color:#8c1414;font-family:'DejaVu Sans Condensed','Liberation Sans',sans-serif;letter-spacing:0.201px;">previous_frame_sent_to_all_sinks_</span>
<span class="t" style="left:341.0px;top:423.80px;height:16px;line-height:16px;font-size:12px;color:#262626;font-family:'DejaVu Sans Condensed','Liberation Sans',sans-serif;-webkit-text-stroke:0.35px currentColor;">=</span>
<span class="t u" style="left:354px;top:423.80px;height:16px;line-height:16px;font-size:12px;color:#7f7f7f;font-family:'DejaVu Sans Condensed','Liberation Sans',sans-serif;letter-spacing:-0.799px;">{bool}</span>
<span class="t u" style="left:390.7px;top:423.80px;height:16px;line-height:16px;font-size:12px;color:#000000;font-family:'DejaVu Sans Condensed','Liberation Sans',sans-serif;letter-spacing:-0.277px;">false</span>
<svg style="left:90.7px;top:446.2px;" width="9" height="11" viewBox="0 0 9 11"><path d="M2.3 1.5 L6.3 5.5 L2.3 9.5" fill="none" stroke="#7a7a7a" stroke-width="1.3"/></svg>
<svg style="left:111.2px;top:446.0px" width="10" height="11" viewBox="0 0 10 11"><rect x="0" y="0" width="10" height="2.2" fill="#f5b650"/><rect x="0" y="2.9" width="10" height="2.2" fill="#f9d291"/><rect x="0" y="5.8" width="10" height="2.2" fill="#f5b650"/><rect x="0" y="8.7" width="10" height="2.2" fill="#f9d291"/></svg>
<span class="t u" style="left:128.4px;top:444.20px;height:16px;line-height:16px;font-size:12px;color:#8c1414;font-family:'DejaVu Sans Condensed','Liberation Sans',sans-serif;letter-spacing:-0.063px;">frame</span>
<span class="t" style="left:163.7px;top:444.20px;height:16px;line-height:16px;font-size:12px;color:#262626;font-family:'DejaVu Sans Condensed','Liberation Sans',sans-serif;-webkit-text-stroke:0.35px currentColor;">=</span>
<span class="t u" style="left:175.7px;top:444.20px;height:16px;line-height:16px;font-size:12px;color:#7f7f7f;font-family:'DejaVu Sans Condensed','Liberation Sans',sans-serif;letter-spacing:-0.033px;">{const webrtc::VideoFrame &amp;}</span>
<svg style="left:90.7px;top:466.5px;" width="9" height="11" viewBox="0 0 9 11"><path d="M2.3 1.5 L6.3 5.5 L2.3 9.5" fill="none" stroke="#7a7a7a" stroke-width="1.3"/></svg>
<svg style="left:111.2px;top:466.3px" width="10" height="11" viewBox="0 0 10 11"><rect x="0" y="0" width="10" height="2.2" fill="#f5b650"/><rect x="0" y="2.9" width="10" height="2.2" fill="#f9d291"/><rect x="0" y="5.8" width="10" height="2.2" fill="#f5b650"/><rect x="0" y="8.7" width="10" height="2.2" fill="#f9d291"/></svg>
<span class="t u" style="left:128.4px;top:464.50px;height:16px;line-height:16px;font-size:12px;color:#8c1414;font-family:'DejaVu Sans Condensed','Liberation Sans',sans-serif;letter-spacing:-0.431px;">cs</span>
<span class="t" style="left:143.0px;top:464.50px;height:16px;line-height:16px;font-size:12px;color:#262626;font-family:'DejaVu Sans Condensed','Liberation Sans',sans-serif;-webkit-text-stroke:0.35px currentColor;">=</span>
<span class="t u" style="left:155.7px;top:464.50px;height:16px;line-height:16px;font-size:12px;color:#7f7f7f;font-family:'DejaVu Sans Condensed','Liberation Sans',sans-serif;letter-spacing:-0.276px;">{rtc::CritScope}</span>
<svg style="left:111.2px;top:487.0px" width="11" height="11" viewBox="0 0 11 11"><rect width="11" height="10.6" fill="#9bd3ec"/><text x="1.1" y="8.1" font-size="7.4" font-weight="bold" font-family="Liberation Sans,sans-serif" fill="#245070" letter-spacing="-0.3">01</text></svg>
<span class="t u" style="left:128.4px;top:484.80px;height:16px;line-height:16px;font-size:12px;color:#8c1414;font-family:'DejaVu Sans Condensed','Liberation Sans',sans-serif;letter-spacing:0.119px;">current_frame_was_discarded</span>
<span class="t" style="left:296.0px;top:484.80px;height:16px;line-height:16px;font-size:12px;color:#262626;font-family:'DejaVu Sans Condensed','Liberation Sans',sans-serif;-webkit-text-stroke:0.35px currentColor;">=</span>
<span class="t u" style="left:309px;top:484.80px;height:16px;line-height:16px;font-size:12px;color:#7f7f7f;font-family:'DejaVu Sans Condensed','Liberation Sans',sans-serif;letter-spacing:-0.583px;">{bool}</span>
<span class="t u" style="left:346.7px;top:484.80px;height:16px;line-height:16px;font-size:12px;color:#000000;font-family:'DejaVu Sans Condensed','Liberation Sans',sans-serif;letter-spacing:-0.277px;">false</span>
<div style="left:1045px;top:265px;width:19px;height:237px;background:#f2f2f2;"></div>
<div style="left:1045px;top:235.5px;width:19px;height:1px;background:#d6d6d6;"></div>
<div style="left:1045.8px;top:250px;width:10.4px;height:2px;background:#6e6e6e;"></div>
<svg style="left:1045.5px;top:272.5px;" width="17" height="14" viewBox="0 0 17 14"><g fill="#6e6e6e"><rect x="0.5" y="0.5" width="4.2" height="3.4"/><rect x="5.6" y="0.5" width="6" height="3.4"/><rect x="0.5" y="4.8" width="11.1" height="3.6"/><path d="M12 9.6 H16 L14 12 Z"/></g></svg>
<div style="left:1045px;top:321.4px;width:19px;height:181px;background:#ffffff;"></div>
<div style="left:1045px;top:320.4px;width:19px;height:1px;background:#d4d4d4;"></div>
<div style="left:0px;top:502px;width:1080px;height:23px;background:#f2f2f2;"></div>
<div style="left:0px;top:502px;width:1080px;height:1px;background:#d1d1d1;"></div>
<div style="left:105.5px;top:503px;width:70.5px;height:20px;background:#c9c9c9;"></div>
<div style="left:0px;top:522.6px;width:1080px;height:1px;background:#d6d6d6;"></div>
<div style="left:0px;top:523.6px;width:1080px;height:1.4px;background:#f6f6f6;"></div>
<svg style="left:10.5px;top:506.5px;" width="10" height="13" viewBox="0 0 10 13"><g fill="none" stroke="#595959" stroke-width="1.3"><path d="M3 1 V12"/><path d="M3 8.5 C7.5 8.5 7.8 6.5 7.8 3.5"/></g><circle cx="7.8" cy="2.6" r="1.6" fill="#595959"/></svg>
<span class="t u" style="left:25.5px;top:505.30px;height:16px;line-height:16px;font-size:12px;color:#1a1a1a;font-family:'DejaVu Sans Condensed','Liberation Sans',sans-serif;letter-spacing:-0.203px;">Git</span>
<svg style="left:61px;top:507.5px;" width="10" height="11" viewBox="0 0 10 11"><path d="M1 0.8 L9.3 5.5 L1 10.2 Z" fill="#595959"/></svg>
<span class="t u" style="left:75.7px;top:505.30px;height:16px;line-height:16px;font-size:12px;color:#1a1a1a;font-family:'DejaVu Sans Condensed','Liberation Sans',sans-serif;letter-spacing:-0.285px;">Run</span>
<svg style="left:116.5px;top:506px;" width="14" height="14" viewBox="0 0 14 14"><ellipse cx="7" cy="8" rx="3.6" ry="4.6" fill="#595959"/><circle cx="7" cy="3.3" r="2.1" fill="#595959"/><g stroke="#595959" stroke-width="1.1"><path d="M0.8 4.2 L4 6 M13.2 4.2 L10 6 M0.4 8.4 H3.6 M13.6 8.4 H10.4 M1 12.8 L4 10.6 M13 12.8 L10 10.6"/></g><circle cx="11.2" cy="11.6" r="2.3" fill="#3ec43e"/></svg>
<span class="t u" style="left:131.6px;top:505.30px;height:16px;line-height:16px;font-size:12px;color:#1a1a1a;font-family:'DejaVu Sans Condensed','Liberation Sans',sans-serif;letter-spacing:-0.203px;">Debug</span>
<svg style="left:187.5px;top:507.5px;" width="12" height="10" viewBox="0 0 12 10"><g fill="#595959"><rect x="0.5" y="0.8" width="1.8" height="1.7"/><rect x="3.4" y="0.8" width="8" height="1.7"/><rect x="0.5" y="4.1" width="1.8" height="1.7"/><rect x="3.4" y="4.1" width="8" height="1.7"/><rect x="0.5" y="7.4" width="1.8" height="1.7"/><rect x="3.4" y="7.4" width="8" height="1.7"/></g></svg>
<span class="t u" style="left:202px;top:505.30px;height:16px;line-height:16px;font-size:12px;color:#1a1a1a;font-family:'DejaVu Sans Condensed','Liberation Sans',sans-serif;letter-spacing:-0.027px;">TODO</span>
<svg style="left:255.5px;top:507px;" width="11" height="11" viewBox="0 0 11 11"><circle cx="5.5" cy="5.5" r="5" fill="#595959"/><rect x="4.7" y="2.3" width="1.6" height="4.2" fill="#f2f2f2"/><rect x="4.7" y="7.4" width="1.6" height="1.6" fill="#f2f2f2"/></svg>
<span class="t u" style="left:270px;top:505.30px;height:16px;line-height:16px;font-size:12px;color:#1a1a1a;font-family:'DejaVu Sans Condensed','Liberation Sans',sans-serif;letter-spacing:0.010px;">Problems</span>
<svg style="left:343.5px;top:507.2px" width="12" height="11" viewBox="0 0 12 11"><rect x="0.3" y="0.3" width="11.4" height="10.4" fill="#595959"/><path d="M2.6 2.6 L5.6 5.5 L2.6 8.4" fill="none" stroke="#f2f2f2" stroke-width="1.4"/></svg>
<span class="t u" style="left:358.4px;top:505.30px;height:16px;line-height:16px;font-size:12px;color:#1a1a1a;font-family:'DejaVu Sans Condensed','Liberation Sans',sans-serif;letter-spacing:0.199px;">Terminal</span>
<svg style="left:426px;top:508px;" width="12" height="10" viewBox="0 0 12 10"><g fill="#595959"><rect x="0.5" y="0.4" width="10.8" height="2"/><rect x="0.5" y="3.9" width="6.5" height="2"/><rect x="0.5" y="7.4" width="8.5" height="2"/></g></svg>
<span class="t u" style="left:442px;top:505.30px;height:16px;line-height:16px;font-size:12px;color:#1a1a1a;font-family:'DejaVu Sans Condensed','Liberation Sans',sans-serif;letter-spacing:-0.208px;">Logcat</span>
<svg style="left:497px;top:506.5px;" width="13" height="13" viewBox="0 0 13 13"><g transform="rotate(-45 6.5 6.5)"><rect x="2" y="1" width="9" height="3.6" rx="0.8" fill="#595959"/><rect x="5.6" y="4.2" width="1.9" height="8.6" fill="#595959"/></g></svg>
<span class="t u" style="left:513.6px;top:505.30px;height:16px;line-height:16px;font-size:12px;color:#1a1a1a;font-family:'DejaVu Sans Condensed','Liberation Sans',sans-serif;letter-spacing:-0.322px;">Build</span>
<svg style="left:558.5px;top:507px;" width="12" height="11" viewBox="0 0 12 11"><path d="M1.5 9.5 A5 5 0 0 1 10.5 6" fill="none" stroke="#595959" stroke-width="1.8"/><path d="M6.5 8.8 L9 6" stroke="#595959" stroke-width="1.6"/></svg>
<div class="clip" style="left:1045px;top:503px;width:35px;height:20px">
<span class="t u" style="left:-86.5px;top:2.30px;height:16px;line-height:16px;font-size:12px;color:#1a1a1a;font-family:'DejaVu Sans Condensed','Liberation Sans',sans-serif;letter-spacing:0.157px;">Layout Inspector</span>
</div>
<div style="left:567px;top:57px;width:477.5px;height:500px;background:#f2f2f2;border-radius:8px 8px 0 0;box-shadow:0 8px 22px 4px rgba(0,0,0,0.22),0 0 0 0.5px rgba(0,0,0,0.12);"></div>
<div style="left:575px;top:65px;width:0;height:0"><div style="left:-3.6px;top:-3.7px;width:7.4px;height:7.4px;border-radius:50%;background:#ec5a52;"></div><div style="left:7.8px;top:-3.7px;width:7.4px;height:7.4px;border-radius:50%;background:#d6d6d6;"></div><div style="left:19.5px;top:-3.7px;width:7.4px;height:7.4px;border-radius:50%;background:#53b746;"></div></div>
<span class="t" style="left:789.5px;top:59.80px;height:10px;line-height:10px;font-size:8px;color:#454545;font-family:'Liberation Sans',sans-serif;letter-spacing:-0.051px;font-weight:bold;">Evaluate</span>
<span class="t u" style="left:578.9px;top:89.30px;height:16px;line-height:16px;font-size:12px;color:#1a1a1a;font-family:'DejaVu Sans Condensed','Liberation Sans',sans-serif;letter-spacing:0.116px;">Expression:</span>
<div style="left:582.5px;top:110px;width:447px;height:22.5px;background:#ffffff;border:1px solid #c4c4c4;border-radius:3px;box-sizing:border-box;"></div>
<div style="left:1008.2px;top:111px;width:21px;height:20.5px;background:#fafafa;border-radius:0 2px 2px 0;"></div>
<div style="left:1007.4px;top:111px;width:1px;height:20.5px;background:#c4c4c4;"></div>
<div style="left:654.3px;top:113.5px;width:13.8px;height:16.5px;background:#99dbd9;"></div>
<span class="t m" style="left:586px;top:113.40px;height:18px;line-height:18px;font-size:11.4px;color:#080808;font-family:'DejaVu Sans Mono','Liberation Mono',monospace;letter-spacing:-0.025px;">sink_pairs()</span>
<svg style="left:985.5px;top:115px;" width="14" height="13" viewBox="0 0 14 13"><path d="M2.5 11 L11.5 2" stroke="#bcc6cc" stroke-width="1.1"/><path d="M8 1.2 H12.6 V5.8 Z M1.2 7.6 V12.2 H5.8 Z" fill="#bcc6cc"/></svg>
<svg style="left:1013.4px;top:119.3px;" width="10" height="6" viewBox="0 0 10 6"><path d="M0.4 0.4 H9.2 L4.8 5.4 Z" fill="#555555"/></svg>
<span class="t u" style="left:875.7px;top:138.00px;height:16px;line-height:16px;font-size:12px;color:#1a1a1a;font-family:'DejaVu Sans Condensed','Liberation Sans',sans-serif;letter-spacing:-0.296px;">Use</span>
<span class="t" style="left:899.3px;top:137.20px;height:16px;line-height:16px;font-size:14.5px;color:#1a1a1a;font-family:'DejaVu Sans','Liberation Sans',sans-serif;letter-spacing:-1.438px;">⇧⌘↵</span>
<span class="t u" style="left:936.7px;top:138.00px;height:16px;line-height:16px;font-size:12px;color:#1a1a1a;font-family:'DejaVu Sans Condensed','Liberation Sans',sans-serif;letter-spacing:-0.135px;">to add to Watches</span>
<span class="t u" style="left:578.9px;top:158.50px;height:16px;line-height:16px;font-size:12px;color:#1a1a1a;font-family:'DejaVu Sans Condensed','Liberation Sans',sans-serif;letter-spacing:0.007px;">Result:</span>
<div style="left:579.7px;top:173.8px;width:452.5px;height:352px;background:#ffffff;"></div>
<div style="left:579.7px;top:173.8px;width:452.5px;height:20px;background:#2675bf;"></div>
<svg style="left:583.4px;top:179.3px;" width="11" height="9" viewBox="0 0 11 9"><path d="M1.5 2.3 L5.5 6.3 L9.5 2.3" fill="none" stroke="#ffffff" stroke-width="1.3"/></svg>
<svg style="left:605px;top:177.9px" width="10" height="11" viewBox="0 0 10 11"><rect x="0" y="0" width="10" height="2.2" fill="#b39c63"/><rect x="0" y="2.9" width="10" height="2.2" fill="#a08c5c"/><rect x="0" y="5.8" width="10" height="2.2" fill="#b39c63"/><rect x="0" y="8.7" width="10" height="2.2" fill="#a08c5c"/></svg>
<span class="t u" style="left:622px;top:176.50px;height:16px;line-height:16px;font-size:12px;color:#ffffff;font-family:'DejaVu Sans Condensed','Liberation Sans',sans-serif;letter-spacing:0.081px;">result</span>
<span class="t" style="left:657.5px;top:176.50px;height:16px;line-height:16px;font-size:12px;color:#ffffff;font-family:'DejaVu Sans Condensed','Liberation Sans',sans-serif;-webkit-text-stroke:0.35px currentColor;">=</span>
<div class="clip" style="left:669.5px;top:176px;width:319.29999999999995px;height:16px">
<span class="t u" style="left:0px;top:0.50px;height:16px;line-height:16px;font-size:12px;color:#ffffff;font-family:'DejaVu Sans Condensed','Liberation Sans',sans-serif;letter-spacing:0.07px;">{const std::__ndk1::vector&lt;rtc::VideoSourceBase::SinkPair, std::__ndk1::allocator&gt;</span>
</div>
<span class="t u" style="left:990.3px;top:176.50px;height:16px;line-height:16px;font-size:12px;color:#ffffff;font-family:'DejaVu Sans Condensed','Liberation Sans',sans-serif;letter-spacing:-0.432px;">...</span>
<span class="t u" style="left:1005.5px;top:176.50px;height:16px;line-height:16px;font-size:12px;color:#ffffff;font-family:'DejaVu Sans Condensed','Liberation Sans',sans-serif;letter-spacing:-0.148px;">View</span>
<svg style="left:601.4px;top:199.3px;" width="11" height="9" viewBox="0 0 11 9"><path d="M1.5 2.3 L5.5 6.3 L9.5 2.3" fill="none" stroke="#7a7a7a" stroke-width="1.3"/></svg>
<svg style="left:623px;top:197.9px" width="10" height="11" viewBox="0 0 10 11"><rect x="0" y="0" width="10" height="2.2" fill="#f5b650"/><rect x="0" y="2.9" width="10" height="2.2" fill="#f9d291"/><rect x="0" y="5.8" width="10" height="2.2" fill="#f5b650"/><rect x="0" y="8.7" width="10" height="2.2" fill="#f9d291"/></svg>
<span class="t u" style="left:640px;top:196.50px;height:16px;line-height:16px;font-size:12px;color:#8c1414;font-family:'DejaVu Sans Condensed','Liberation Sans',sans-serif;letter-spacing:-0.666px;">[0]</span>
<span class="t" style="left:657.5px;top:196.50px;height:16px;line-height:16px;font-size:12px;color:#262626;font-family:'DejaVu Sans Condensed','Liberation Sans',sans-serif;-webkit-text-stroke:0.35px currentColor;">=</span>
<span class="t u" style="left:670.5px;top:196.50px;height:16px;line-height:16px;font-size:12px;color:#7f7f7f;font-family:'DejaVu Sans Condensed','Liberation Sans',sans-serif;letter-spacing:-0.098px;">{rtc::VideoSourceBase::SinkPair}</span>
<svg style="left:619.5px;top:218.8px;" width="9" height="11" viewBox="0 0 9 11"><path d="M2.3 1.5 L6.3 5.5 L2.3 9.5" fill="none" stroke="#7a7a7a" stroke-width="1.3"/></svg>
<svg style="left:640.8px;top:218.20000000000002px" width="10" height="11" viewBox="0 0 10 11"><rect x="0" y="0" width="10" height="2.2" fill="#f5b650"/><rect x="0" y="2.9" width="10" height="2.2" fill="#f9d291"/><rect x="0" y="5.8" width="10" height="2.2" fill="#f5b650"/><rect x="0" y="8.7" width="10" height="2.2" fill="#f9d291"/></svg>
<span class="t u" style="left:658px;top:216.80px;height:16px;line-height:16px;font-size:12px;color:#8c1414;font-family:'DejaVu Sans Condensed','Liberation Sans',sans-serif;letter-spacing:0.066px;">sink</span>
<span class="t" style="left:683.7px;top:216.80px;height:16px;line-height:16px;font-size:12px;color:#262626;font-family:'DejaVu Sans Condensed','Liberation Sans',sans-serif;-webkit-text-stroke:0.35px currentColor;">=</span>
<div class="clip" style="left:696.8px;top:216.3px;width:291.70000000000005px;height:16px">
<span class="t u" style="left:0px;top:0.50px;height:16px;line-height:16px;font-size:12px;color:#7f7f7f;font-family:'DejaVu Sans Condensed','Liberation Sans',sans-serif;letter-spacing:0.07px;">{webrtc::jni::VideoSinkWrapper * | 0x75a7a9d9f0} <span style="color:#000">0x00000075a7a9d9f0</span></span>
</div>
<span class="t u" style="left:990.3px;top:216.80px;height:16px;line-height:16px;font-size:12px;color:#5c9ad6;font-family:'DejaVu Sans Condensed','Liberation Sans',sans-serif;letter-spacing:-0.432px;">...</span>
<span class="t u" style="left:1005.5px;top:216.80px;height:16px;line-height:16px;font-size:12px;color:#5c9ad6;font-family:'DejaVu Sans Condensed','Liberation Sans',sans-serif;letter-spacing:-0.148px;">View</span>
<svg style="left:619.5px;top:238.8px;" width="9" height="11" viewBox="0 0 9 11"><path d="M2.3 1.5 L6.3 5.5 L2.3 9.5" fill="none" stroke="#7a7a7a" stroke-width="1.3"/></svg>
<svg style="left:640.8px;top:238.20000000000002px" width="10" height="11" viewBox="0 0 10 11"><rect x="0" y="0" width="10" height="2.2" fill="#f5b650"/><rect x="0" y="2.9" width="10" height="2.2" fill="#f9d291"/><rect x="0" y="5.8" width="10" height="2.2" fill="#f5b650"/><rect x="0" y="8.7" width="10" height="2.2" fill="#f9d291"/></svg>
<span class="t u" style="left:658px;top:236.80px;height:16px;line-height:16px;font-size:12px;color:#8c1414;font-family:'DejaVu Sans Condensed','Liberation Sans',sans-serif;letter-spacing:-0.171px;">wants</span>
<span class="t" style="left:693.2px;top:236.80px;height:16px;line-height:16px;font-size:12px;color:#262626;font-family:'DejaVu Sans Condensed','Liberation Sans',sans-serif;-webkit-text-stroke:0.35px currentColor;">=</span>
<span class="t u" style="left:705.8px;top:236.80px;height:16px;line-height:16px;font-size:12px;color:#7f7f7f;font-family:'DejaVu Sans Condensed','Liberation Sans',sans-serif;letter-spacing:-0.134px;">{rtc::VideoSinkWants}</span>
<svg style="left:601.4px;top:259.8px;" width="11" height="9" viewBox="0 0 11 9"><path d="M1.5 2.3 L5.5 6.3 L9.5 2.3" fill="none" stroke="#7a7a7a" stroke-width="1.3"/></svg>
<svg style="left:623px;top:258.4px" width="10" height="11" viewBox="0 0 10 11"><rect x="0" y="0" width="10" height="2.2" fill="#f5b650"/><rect x="0" y="2.9" width="10" height="2.2" fill="#f9d291"/><rect x="0" y="5.8" width="10" height="2.2" fill="#f5b650"/><rect x="0" y="8.7" width="10" height="2.2" fill="#f9d291"/></svg>
<span class="t u" style="left:640px;top:257.00px;height:16px;line-height:16px;font-size:12px;color:#8c1414;font-family:'DejaVu Sans Condensed','Liberation Sans',sans-serif;letter-spacing:-0.666px;">[1]</span>
<span class="t" style="left:657.5px;top:257.00px;height:16px;line-height:16px;font-size:12px;color:#262626;font-family:'DejaVu Sans Condensed','Liberation Sans',sans-serif;-webkit-text-stroke:0.35px currentColor;">=</span>
<span class="t u" style="left:670.5px;top:257.00px;height:16px;line-height:16px;font-size:12px;color:#7f7f7f;font-family:'DejaVu Sans Condensed','Liberation Sans',sans-serif;letter-spacing:-0.098px;">{rtc::VideoSourceBase::SinkPair}</span>
<svg style="left:619.5px;top:279.5px;" width="9" height="11" viewBox="0 0 9 11"><path d="M2.3 1.5 L6.3 5.5 L2.3 9.5" fill="none" stroke="#7a7a7a" stroke-width="1.3"/></svg>
<svg style="left:640.8px;top:278.9px" width="10" height="11" viewBox="0 0 10 11"><rect x="0" y="0" width="10" height="2.2" fill="#f5b650"/><rect x="0" y="2.9" width="10" height="2.2" fill="#f9d291"/><rect x="0" y="5.8" width="10" height="2.2" fill="#f5b650"/><rect x="0" y="8.7" width="10" height="2.2" fill="#f9d291"/></svg>
<span class="t u" style="left:658px;top:277.50px;height:16px;line-height:16px;font-size:12px;color:#8c1414;font-family:'DejaVu Sans Condensed','Liberation Sans',sans-serif;letter-spacing:0.066px;">sink</span>
<span class="t" style="left:683.7px;top:277.50px;height:16px;line-height:16px;font-size:12px;color:#262626;font-family:'DejaVu Sans Condensed','Liberation Sans',sans-serif;-webkit-text-stroke:0.35px currentColor;">=</span>
<div class="clip" style="left:696.8px;top:277px;width:290.20000000000005px;height:16px">
<span class="t u" style="left:0px;top:0.50px;height:16px;line-height:16px;font-size:12px;color:#7f7f7f;font-family:'DejaVu Sans Condensed','Liberation Sans',sans-serif;letter-spacing:0.07px;">{webrtc::VideoStreamEncoder * | 0x7540cda800} <span style="color:#000">0x0000007540cda800</span></span>
</div>
<span class="t u" style="left:990.3px;top:277.50px;height:16px;line-height:16px;font-size:12px;color:#5c9ad6;font-family:'DejaVu Sans Condensed','Liberation Sans',sans-serif;letter-spacing:-0.432px;">...</span>
<span class="t u" style="left:1005.5px;top:277.50px;height:16px;line-height:16px;font-size:12px;color:#5c9ad6;font-family:'DejaVu Sans Condensed','Liberation Sans',sans-serif;letter-spacing:-0.148px;">View</span>
<svg style="left:619.5px;top:299.5px;" width="9" height="11" viewBox="0 0 9 11"><path d="M2.3 1.5 L6.3 5.5 L2.3 9.5" fill="none" stroke="#7a7a7a" stroke-width="1.3"/></svg>
<svg style="left:640.8px;top:298.9px" width="10" height="11" viewBox="0 0 10 11"><rect x="0" y="0" width="10" height="2.2" fill="#f5b650"/><rect x="0" y="2.9" width="10" height="2.2" fill="#f9d291"/><rect x="0" y="5.8" width="10" height="2.2" fill="#f5b650"/><rect x="0" y="8.7" width="10" height="2.2" fill="#f9d291"/></svg>
<span class="t u" style="left:658px;top:297.50px;height:16px;line-height:16px;font-size:12px;color:#8c1414;font-family:'DejaVu Sans Condensed','Liberation Sans',sans-serif;letter-spacing:-0.171px;">wants</span>
<span class="t" style="left:693.2px;top:297.50px;height:16px;line-height:16px;font-size:12px;color:#262626;font-family:'DejaVu Sans Condensed','Liberation Sans',sans-serif;-webkit-text-stroke:0.35px currentColor;">=</span>
<span class="t u" style="left:705.8px;top:297.50px;height:16px;line-height:16px;font-size:12px;color:#7f7f7f;font-family:'DejaVu Sans Condensed','Liberation Sans',sans-serif;letter-spacing:-0.134px;">{rtc::VideoSinkWants}</span>
<div style="left:652.2px;top:212.3px;width:234px;height:24.2px;background:transparent;border:2px solid #e0412e;border-radius:4.5px;box-sizing:border-box;"></div>
<svg style="left:925px;top:459px;filter:drop-shadow(0.7px 0.7px 0.4px rgba(0,0,0,0.25))" width="44" height="38" viewBox="0 0 44 38"><g fill="#ffffff" stroke="#d4d4d4" stroke-width="1.4"><path d="M16 2.5 C8 2.5 2.2 7.4 2.2 13.6 C2.2 17.2 4.2 20.2 7.4 22.2 L6.2 26.2 L10.8 23.8 C12.4 24.3 14 24.6 16 24.6 C24 24.6 29.8 19.8 29.8 13.6 C29.8 7.4 24 2.5 16 2.5 Z"/><path d="M29.5 13.2 C22.8 13.2 17.6 17.6 17.6 23 C17.6 28.4 22.8 32.8 29.5 32.8 C31 32.8 32.4 32.6 33.6 32.2 L37.6 34.4 L36.6 30.8 C39.6 29 41.4 26.2 41.4 23 C41.4 17.6 36.2 13.2 29.5 13.2 Z"/></g><g fill="#d4d4d4"><circle cx="11" cy="10.6" r="1.5"/><circle cx="20.6" cy="10.6" r="1.5"/><circle cx="25.4" cy="20.6" r="1.3"/><circle cx="33.4" cy="20.6" r="1.3"/></g></svg>
<span class="t" style="left:969.5px;top:463.50px;height:32px;line-height:32px;font-size:27px;color:#ffffff;font-family:'DejaVu Sans','Liberation Sans',sans-serif;letter-spacing:-2.203px;font-weight:200;text-shadow:0.9px 0.9px 0.7px rgba(0,0,0,0.33);">DevYk</span>
</div></body></html>
